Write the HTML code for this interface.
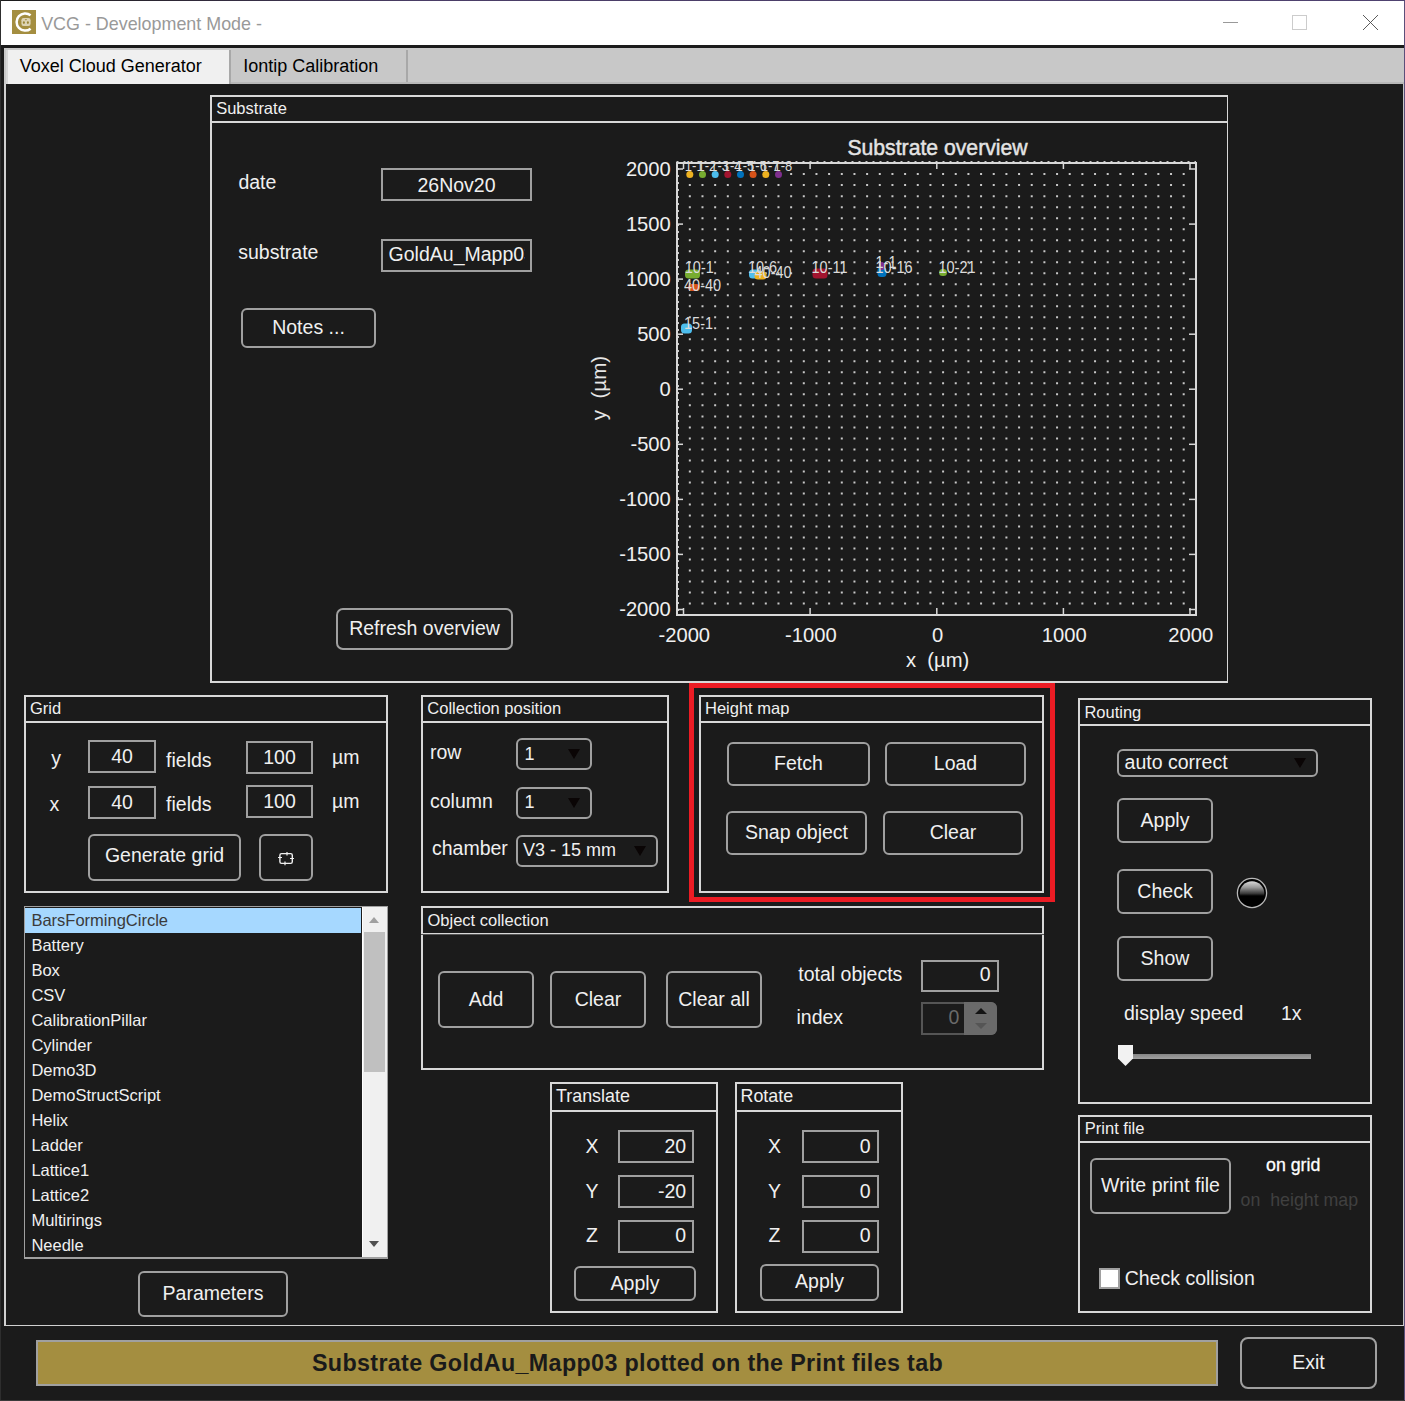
<!DOCTYPE html>
<html><head><meta charset="utf-8"><style>
html,body{margin:0;padding:0;}
body{width:1405px;height:1401px;overflow:hidden;background:#1b1b1b;position:relative;font-family:"Liberation Sans",sans-serif;}
.t{position:absolute;white-space:pre;}
</style></head><body>

<div style="position:absolute;left:0px;top:0px;width:1405px;height:1401px;box-sizing:border-box;background:#1b1b1b;"></div>
<div style="position:absolute;left:1px;top:1px;width:1403px;height:44px;box-sizing:border-box;background:#ffffff;"></div>
<div style="position:absolute;left:1404px;top:0px;width:1px;height:1401px;box-sizing:border-box;background:#5b4f7a;"></div>
<div style="position:absolute;left:0px;top:0px;width:1405px;height:1px;box-sizing:border-box;background:linear-gradient(90deg,#1b1b1b 0px,#2a2530 150px,#4a3d66 420px,#4f4270 1405px);"></div>
<div style="position:absolute;left:0px;top:0px;width:1px;height:1401px;box-sizing:border-box;background:#2e2e2e;"></div>
<div style="position:absolute;left:0px;top:1400px;width:1405px;height:1px;box-sizing:border-box;background:#3a3a3a;"></div>
<div style="position:absolute;left:12px;top:10px;width:24px;height:24px;box-sizing:border-box;background:#a48e40;"></div>
<svg style="position:absolute;left:12px;top:10px" width="24" height="24" viewBox="0 0 24 24"><path d="M18.6 5.3 A8.6 8.6 0 1 0 18.6 18.7" fill="none" stroke="#fff" stroke-width="2.5"/><rect x="9.4" y="8.1" width="9.2" height="7.9" rx="2.2" fill="#ddd3b4"/><ellipse cx="11.9" cy="12.6" rx="1" ry="1.4" fill="#9a8536"/><ellipse cx="15.9" cy="12.6" rx="1" ry="1.4" fill="#9a8536"/><path d="M12.6 9.2h2.6l-1.3 1.3z" fill="#9a8536"/></svg>
<div class="t" style="left:41.20px;top:16.25px;font-size:17.9px;line-height:17.9px;color:#999999;font-weight:normal;">VCG - Development Mode -</div>
<div style="position:absolute;left:1223px;top:22px;width:15px;height:1px;box-sizing:border-box;background:#999999;"></div>
<div style="position:absolute;left:1292px;top:15px;width:15px;height:15px;box-sizing:border-box;border:1px solid #cccccc;"></div>
<svg style="position:absolute;left:1362px;top:14px" width="17" height="17" viewBox="0 0 17 17"><path d="M1 1L16 16M16 1L1 16" stroke="#4a4a4a" stroke-width="0.9"/></svg>
<div style="position:absolute;left:1px;top:45px;width:1403px;height:3px;box-sizing:border-box;background:#1b1b1b;"></div>
<div style="position:absolute;left:4px;top:48px;width:1400px;height:36px;box-sizing:border-box;background:#c8c8c8;"></div>
<div style="position:absolute;left:7px;top:50px;width:223px;height:34px;box-sizing:border-box;background:#f0f0f0;"></div>
<div style="position:absolute;left:4px;top:48px;width:3px;height:36px;box-sizing:border-box;background:#c8c8c8;"></div>
<div style="position:absolute;left:6px;top:50px;width:2px;height:34px;box-sizing:border-box;background:#d8d8d8;"></div>
<div style="position:absolute;left:229px;top:50px;width:2px;height:34px;box-sizing:border-box;background:#a8a8a8;"></div>
<div style="position:absolute;left:406px;top:50px;width:2px;height:33px;box-sizing:border-box;background:#a8a8a8;"></div>
<div style="position:absolute;left:231px;top:82px;width:1173px;height:2px;box-sizing:border-box;background:#b8b8b8;"></div>
<div class="t" style="left:19.70px;top:57.16px;font-size:18px;line-height:18px;color:#000000;font-weight:normal;">Voxel Cloud Generator</div>
<div class="t" style="left:243.30px;top:57.16px;font-size:18px;line-height:18px;color:#000000;font-weight:normal;">Iontip Calibration</div>
<div style="position:absolute;left:4px;top:84px;width:2px;height:1242px;box-sizing:border-box;background:#d0d0d0;"></div>
<div style="position:absolute;left:1403px;top:84px;width:1px;height:1242px;box-sizing:border-box;background:#c8c8c8;"></div>
<div style="position:absolute;left:4px;top:1325px;width:1400px;height:1px;box-sizing:border-box;background:#d0d0d0;"></div>
<div style="position:absolute;left:210px;top:95px;width:1019px;height:588px;box-sizing:border-box;border:2px solid #d8d8d8;"></div>
<div style="position:absolute;left:210px;top:121px;width:1019px;height:2px;box-sizing:border-box;background:#d8d8d8;"></div>
<div class="t" style="left:216.20px;top:99.73px;font-size:16.5px;line-height:16.5px;color:#f0f0f0;font-weight:normal;">Substrate</div>
<div style="position:absolute;left:1228px;top:95px;width:1px;height:588px;box-sizing:border-box;background:#1b1b1b;"></div>
<div class="t" style="left:238.40px;top:172.89px;font-size:19.5px;line-height:19.5px;color:#f0f0f0;font-weight:normal;">date</div>
<div style="position:absolute;left:381px;top:168px;width:151px;height:33px;box-sizing:border-box;border:2px solid #a0a0a0;"></div>
<div class="t" style="left:56.50px;width:800px;text-align:center;top:175.89px;font-size:19.5px;line-height:19.5px;color:#f0f0f0;font-weight:normal;">26Nov20</div>
<div class="t" style="left:238.20px;top:243.49px;font-size:19.5px;line-height:19.5px;color:#f0f0f0;font-weight:normal;">substrate</div>
<div style="position:absolute;left:381px;top:239px;width:151px;height:33px;box-sizing:border-box;border:2px solid #a0a0a0;"></div>
<div style="position:absolute;left:383px;top:242px;width:142px;height:28px;overflow:hidden;"><div class="t" style="left:5.6px;top:2.99px;font-size:19.5px;line-height:19.5px;color:#f0f0f0">GoldAu_Mapp03</div></div>
<div style="position:absolute;left:241px;top:308px;width:135px;height:40px;box-sizing:border-box;border:2px solid #a0a0a0;border-radius:6px;"></div>
<div class="t" style="left:-91.50px;width:800px;text-align:center;top:317.79px;font-size:19.5px;line-height:19.5px;color:#f0f0f0;font-weight:normal;">Notes ...</div>
<div style="position:absolute;left:336px;top:608px;width:177px;height:42px;box-sizing:border-box;border:2px solid #a0a0a0;border-radius:7px;"></div>
<div class="t" style="left:24.50px;width:800px;text-align:center;top:619.39px;font-size:19.5px;line-height:19.5px;color:#f0f0f0;font-weight:normal;">Refresh overview</div>
<svg style="position:absolute;left:0;top:0" width="1405" height="1401"><path d="M688.83 602.59h2v2h-2zM688.83 591.58h2v2h-2zM688.83 580.57h2v2h-2zM688.83 569.56h2v2h-2zM688.83 558.54h2v2h-2zM688.83 547.53h2v2h-2zM688.83 536.52h2v2h-2zM688.83 525.51h2v2h-2zM688.83 514.49h2v2h-2zM688.83 503.48h2v2h-2zM688.83 492.47h2v2h-2zM688.83 481.46h2v2h-2zM688.83 470.44h2v2h-2zM688.83 459.43h2v2h-2zM688.83 448.42h2v2h-2zM688.83 437.41h2v2h-2zM688.83 426.39h2v2h-2zM688.83 415.38h2v2h-2zM688.83 404.37h2v2h-2zM688.83 393.36h2v2h-2zM688.83 382.34h2v2h-2zM688.83 371.33h2v2h-2zM688.83 360.32h2v2h-2zM688.83 349.31h2v2h-2zM688.83 338.29h2v2h-2zM688.83 327.28h2v2h-2zM688.83 316.27h2v2h-2zM688.83 305.26h2v2h-2zM688.83 294.24h2v2h-2zM688.83 283.23h2v2h-2zM688.83 272.22h2v2h-2zM688.83 261.21h2v2h-2zM688.83 250.19h2v2h-2zM688.83 239.18h2v2h-2zM688.83 228.17h2v2h-2zM688.83 217.16h2v2h-2zM688.83 206.14h2v2h-2zM688.83 195.13h2v2h-2zM688.83 184.12h2v2h-2zM688.83 173.11h2v2h-2zM701.49 602.59h2v2h-2zM701.49 591.58h2v2h-2zM701.49 580.57h2v2h-2zM701.49 569.56h2v2h-2zM701.49 558.54h2v2h-2zM701.49 547.53h2v2h-2zM701.49 536.52h2v2h-2zM701.49 525.51h2v2h-2zM701.49 514.49h2v2h-2zM701.49 503.48h2v2h-2zM701.49 492.47h2v2h-2zM701.49 481.46h2v2h-2zM701.49 470.44h2v2h-2zM701.49 459.43h2v2h-2zM701.49 448.42h2v2h-2zM701.49 437.41h2v2h-2zM701.49 426.39h2v2h-2zM701.49 415.38h2v2h-2zM701.49 404.37h2v2h-2zM701.49 393.36h2v2h-2zM701.49 382.34h2v2h-2zM701.49 371.33h2v2h-2zM701.49 360.32h2v2h-2zM701.49 349.31h2v2h-2zM701.49 338.29h2v2h-2zM701.49 327.28h2v2h-2zM701.49 316.27h2v2h-2zM701.49 305.26h2v2h-2zM701.49 294.24h2v2h-2zM701.49 283.23h2v2h-2zM701.49 272.22h2v2h-2zM701.49 261.21h2v2h-2zM701.49 250.19h2v2h-2zM701.49 239.18h2v2h-2zM701.49 228.17h2v2h-2zM701.49 217.16h2v2h-2zM701.49 206.14h2v2h-2zM701.49 195.13h2v2h-2zM701.49 184.12h2v2h-2zM701.49 173.11h2v2h-2zM714.16 602.59h2v2h-2zM714.16 591.58h2v2h-2zM714.16 580.57h2v2h-2zM714.16 569.56h2v2h-2zM714.16 558.54h2v2h-2zM714.16 547.53h2v2h-2zM714.16 536.52h2v2h-2zM714.16 525.51h2v2h-2zM714.16 514.49h2v2h-2zM714.16 503.48h2v2h-2zM714.16 492.47h2v2h-2zM714.16 481.46h2v2h-2zM714.16 470.44h2v2h-2zM714.16 459.43h2v2h-2zM714.16 448.42h2v2h-2zM714.16 437.41h2v2h-2zM714.16 426.39h2v2h-2zM714.16 415.38h2v2h-2zM714.16 404.37h2v2h-2zM714.16 393.36h2v2h-2zM714.16 382.34h2v2h-2zM714.16 371.33h2v2h-2zM714.16 360.32h2v2h-2zM714.16 349.31h2v2h-2zM714.16 338.29h2v2h-2zM714.16 327.28h2v2h-2zM714.16 316.27h2v2h-2zM714.16 305.26h2v2h-2zM714.16 294.24h2v2h-2zM714.16 283.23h2v2h-2zM714.16 272.22h2v2h-2zM714.16 261.21h2v2h-2zM714.16 250.19h2v2h-2zM714.16 239.18h2v2h-2zM714.16 228.17h2v2h-2zM714.16 217.16h2v2h-2zM714.16 206.14h2v2h-2zM714.16 195.13h2v2h-2zM714.16 184.12h2v2h-2zM714.16 173.11h2v2h-2zM726.82 602.59h2v2h-2zM726.82 591.58h2v2h-2zM726.82 580.57h2v2h-2zM726.82 569.56h2v2h-2zM726.82 558.54h2v2h-2zM726.82 547.53h2v2h-2zM726.82 536.52h2v2h-2zM726.82 525.51h2v2h-2zM726.82 514.49h2v2h-2zM726.82 503.48h2v2h-2zM726.82 492.47h2v2h-2zM726.82 481.46h2v2h-2zM726.82 470.44h2v2h-2zM726.82 459.43h2v2h-2zM726.82 448.42h2v2h-2zM726.82 437.41h2v2h-2zM726.82 426.39h2v2h-2zM726.82 415.38h2v2h-2zM726.82 404.37h2v2h-2zM726.82 393.36h2v2h-2zM726.82 382.34h2v2h-2zM726.82 371.33h2v2h-2zM726.82 360.32h2v2h-2zM726.82 349.31h2v2h-2zM726.82 338.29h2v2h-2zM726.82 327.28h2v2h-2zM726.82 316.27h2v2h-2zM726.82 305.26h2v2h-2zM726.82 294.24h2v2h-2zM726.82 283.23h2v2h-2zM726.82 272.22h2v2h-2zM726.82 261.21h2v2h-2zM726.82 250.19h2v2h-2zM726.82 239.18h2v2h-2zM726.82 228.17h2v2h-2zM726.82 217.16h2v2h-2zM726.82 206.14h2v2h-2zM726.82 195.13h2v2h-2zM726.82 184.12h2v2h-2zM726.82 173.11h2v2h-2zM739.48 602.59h2v2h-2zM739.48 591.58h2v2h-2zM739.48 580.57h2v2h-2zM739.48 569.56h2v2h-2zM739.48 558.54h2v2h-2zM739.48 547.53h2v2h-2zM739.48 536.52h2v2h-2zM739.48 525.51h2v2h-2zM739.48 514.49h2v2h-2zM739.48 503.48h2v2h-2zM739.48 492.47h2v2h-2zM739.48 481.46h2v2h-2zM739.48 470.44h2v2h-2zM739.48 459.43h2v2h-2zM739.48 448.42h2v2h-2zM739.48 437.41h2v2h-2zM739.48 426.39h2v2h-2zM739.48 415.38h2v2h-2zM739.48 404.37h2v2h-2zM739.48 393.36h2v2h-2zM739.48 382.34h2v2h-2zM739.48 371.33h2v2h-2zM739.48 360.32h2v2h-2zM739.48 349.31h2v2h-2zM739.48 338.29h2v2h-2zM739.48 327.28h2v2h-2zM739.48 316.27h2v2h-2zM739.48 305.26h2v2h-2zM739.48 294.24h2v2h-2zM739.48 283.23h2v2h-2zM739.48 272.22h2v2h-2zM739.48 261.21h2v2h-2zM739.48 250.19h2v2h-2zM739.48 239.18h2v2h-2zM739.48 228.17h2v2h-2zM739.48 217.16h2v2h-2zM739.48 206.14h2v2h-2zM739.48 195.13h2v2h-2zM739.48 184.12h2v2h-2zM739.48 173.11h2v2h-2zM752.15 602.59h2v2h-2zM752.15 591.58h2v2h-2zM752.15 580.57h2v2h-2zM752.15 569.56h2v2h-2zM752.15 558.54h2v2h-2zM752.15 547.53h2v2h-2zM752.15 536.52h2v2h-2zM752.15 525.51h2v2h-2zM752.15 514.49h2v2h-2zM752.15 503.48h2v2h-2zM752.15 492.47h2v2h-2zM752.15 481.46h2v2h-2zM752.15 470.44h2v2h-2zM752.15 459.43h2v2h-2zM752.15 448.42h2v2h-2zM752.15 437.41h2v2h-2zM752.15 426.39h2v2h-2zM752.15 415.38h2v2h-2zM752.15 404.37h2v2h-2zM752.15 393.36h2v2h-2zM752.15 382.34h2v2h-2zM752.15 371.33h2v2h-2zM752.15 360.32h2v2h-2zM752.15 349.31h2v2h-2zM752.15 338.29h2v2h-2zM752.15 327.28h2v2h-2zM752.15 316.27h2v2h-2zM752.15 305.26h2v2h-2zM752.15 294.24h2v2h-2zM752.15 283.23h2v2h-2zM752.15 272.22h2v2h-2zM752.15 261.21h2v2h-2zM752.15 250.19h2v2h-2zM752.15 239.18h2v2h-2zM752.15 228.17h2v2h-2zM752.15 217.16h2v2h-2zM752.15 206.14h2v2h-2zM752.15 195.13h2v2h-2zM752.15 184.12h2v2h-2zM752.15 173.11h2v2h-2zM764.81 602.59h2v2h-2zM764.81 591.58h2v2h-2zM764.81 580.57h2v2h-2zM764.81 569.56h2v2h-2zM764.81 558.54h2v2h-2zM764.81 547.53h2v2h-2zM764.81 536.52h2v2h-2zM764.81 525.51h2v2h-2zM764.81 514.49h2v2h-2zM764.81 503.48h2v2h-2zM764.81 492.47h2v2h-2zM764.81 481.46h2v2h-2zM764.81 470.44h2v2h-2zM764.81 459.43h2v2h-2zM764.81 448.42h2v2h-2zM764.81 437.41h2v2h-2zM764.81 426.39h2v2h-2zM764.81 415.38h2v2h-2zM764.81 404.37h2v2h-2zM764.81 393.36h2v2h-2zM764.81 382.34h2v2h-2zM764.81 371.33h2v2h-2zM764.81 360.32h2v2h-2zM764.81 349.31h2v2h-2zM764.81 338.29h2v2h-2zM764.81 327.28h2v2h-2zM764.81 316.27h2v2h-2zM764.81 305.26h2v2h-2zM764.81 294.24h2v2h-2zM764.81 283.23h2v2h-2zM764.81 272.22h2v2h-2zM764.81 261.21h2v2h-2zM764.81 250.19h2v2h-2zM764.81 239.18h2v2h-2zM764.81 228.17h2v2h-2zM764.81 217.16h2v2h-2zM764.81 206.14h2v2h-2zM764.81 195.13h2v2h-2zM764.81 184.12h2v2h-2zM764.81 173.11h2v2h-2zM777.47 602.59h2v2h-2zM777.47 591.58h2v2h-2zM777.47 580.57h2v2h-2zM777.47 569.56h2v2h-2zM777.47 558.54h2v2h-2zM777.47 547.53h2v2h-2zM777.47 536.52h2v2h-2zM777.47 525.51h2v2h-2zM777.47 514.49h2v2h-2zM777.47 503.48h2v2h-2zM777.47 492.47h2v2h-2zM777.47 481.46h2v2h-2zM777.47 470.44h2v2h-2zM777.47 459.43h2v2h-2zM777.47 448.42h2v2h-2zM777.47 437.41h2v2h-2zM777.47 426.39h2v2h-2zM777.47 415.38h2v2h-2zM777.47 404.37h2v2h-2zM777.47 393.36h2v2h-2zM777.47 382.34h2v2h-2zM777.47 371.33h2v2h-2zM777.47 360.32h2v2h-2zM777.47 349.31h2v2h-2zM777.47 338.29h2v2h-2zM777.47 327.28h2v2h-2zM777.47 316.27h2v2h-2zM777.47 305.26h2v2h-2zM777.47 294.24h2v2h-2zM777.47 283.23h2v2h-2zM777.47 272.22h2v2h-2zM777.47 261.21h2v2h-2zM777.47 250.19h2v2h-2zM777.47 239.18h2v2h-2zM777.47 228.17h2v2h-2zM777.47 217.16h2v2h-2zM777.47 206.14h2v2h-2zM777.47 195.13h2v2h-2zM777.47 184.12h2v2h-2zM777.47 173.11h2v2h-2zM790.14 602.59h2v2h-2zM790.14 591.58h2v2h-2zM790.14 580.57h2v2h-2zM790.14 569.56h2v2h-2zM790.14 558.54h2v2h-2zM790.14 547.53h2v2h-2zM790.14 536.52h2v2h-2zM790.14 525.51h2v2h-2zM790.14 514.49h2v2h-2zM790.14 503.48h2v2h-2zM790.14 492.47h2v2h-2zM790.14 481.46h2v2h-2zM790.14 470.44h2v2h-2zM790.14 459.43h2v2h-2zM790.14 448.42h2v2h-2zM790.14 437.41h2v2h-2zM790.14 426.39h2v2h-2zM790.14 415.38h2v2h-2zM790.14 404.37h2v2h-2zM790.14 393.36h2v2h-2zM790.14 382.34h2v2h-2zM790.14 371.33h2v2h-2zM790.14 360.32h2v2h-2zM790.14 349.31h2v2h-2zM790.14 338.29h2v2h-2zM790.14 327.28h2v2h-2zM790.14 316.27h2v2h-2zM790.14 305.26h2v2h-2zM790.14 294.24h2v2h-2zM790.14 283.23h2v2h-2zM790.14 272.22h2v2h-2zM790.14 261.21h2v2h-2zM790.14 250.19h2v2h-2zM790.14 239.18h2v2h-2zM790.14 228.17h2v2h-2zM790.14 217.16h2v2h-2zM790.14 206.14h2v2h-2zM790.14 195.13h2v2h-2zM790.14 184.12h2v2h-2zM790.14 173.11h2v2h-2zM802.80 602.59h2v2h-2zM802.80 591.58h2v2h-2zM802.80 580.57h2v2h-2zM802.80 569.56h2v2h-2zM802.80 558.54h2v2h-2zM802.80 547.53h2v2h-2zM802.80 536.52h2v2h-2zM802.80 525.51h2v2h-2zM802.80 514.49h2v2h-2zM802.80 503.48h2v2h-2zM802.80 492.47h2v2h-2zM802.80 481.46h2v2h-2zM802.80 470.44h2v2h-2zM802.80 459.43h2v2h-2zM802.80 448.42h2v2h-2zM802.80 437.41h2v2h-2zM802.80 426.39h2v2h-2zM802.80 415.38h2v2h-2zM802.80 404.37h2v2h-2zM802.80 393.36h2v2h-2zM802.80 382.34h2v2h-2zM802.80 371.33h2v2h-2zM802.80 360.32h2v2h-2zM802.80 349.31h2v2h-2zM802.80 338.29h2v2h-2zM802.80 327.28h2v2h-2zM802.80 316.27h2v2h-2zM802.80 305.26h2v2h-2zM802.80 294.24h2v2h-2zM802.80 283.23h2v2h-2zM802.80 272.22h2v2h-2zM802.80 261.21h2v2h-2zM802.80 250.19h2v2h-2zM802.80 239.18h2v2h-2zM802.80 228.17h2v2h-2zM802.80 217.16h2v2h-2zM802.80 206.14h2v2h-2zM802.80 195.13h2v2h-2zM802.80 184.12h2v2h-2zM802.80 173.11h2v2h-2zM815.46 602.59h2v2h-2zM815.46 591.58h2v2h-2zM815.46 580.57h2v2h-2zM815.46 569.56h2v2h-2zM815.46 558.54h2v2h-2zM815.46 547.53h2v2h-2zM815.46 536.52h2v2h-2zM815.46 525.51h2v2h-2zM815.46 514.49h2v2h-2zM815.46 503.48h2v2h-2zM815.46 492.47h2v2h-2zM815.46 481.46h2v2h-2zM815.46 470.44h2v2h-2zM815.46 459.43h2v2h-2zM815.46 448.42h2v2h-2zM815.46 437.41h2v2h-2zM815.46 426.39h2v2h-2zM815.46 415.38h2v2h-2zM815.46 404.37h2v2h-2zM815.46 393.36h2v2h-2zM815.46 382.34h2v2h-2zM815.46 371.33h2v2h-2zM815.46 360.32h2v2h-2zM815.46 349.31h2v2h-2zM815.46 338.29h2v2h-2zM815.46 327.28h2v2h-2zM815.46 316.27h2v2h-2zM815.46 305.26h2v2h-2zM815.46 294.24h2v2h-2zM815.46 283.23h2v2h-2zM815.46 272.22h2v2h-2zM815.46 261.21h2v2h-2zM815.46 250.19h2v2h-2zM815.46 239.18h2v2h-2zM815.46 228.17h2v2h-2zM815.46 217.16h2v2h-2zM815.46 206.14h2v2h-2zM815.46 195.13h2v2h-2zM815.46 184.12h2v2h-2zM815.46 173.11h2v2h-2zM828.12 602.59h2v2h-2zM828.12 591.58h2v2h-2zM828.12 580.57h2v2h-2zM828.12 569.56h2v2h-2zM828.12 558.54h2v2h-2zM828.12 547.53h2v2h-2zM828.12 536.52h2v2h-2zM828.12 525.51h2v2h-2zM828.12 514.49h2v2h-2zM828.12 503.48h2v2h-2zM828.12 492.47h2v2h-2zM828.12 481.46h2v2h-2zM828.12 470.44h2v2h-2zM828.12 459.43h2v2h-2zM828.12 448.42h2v2h-2zM828.12 437.41h2v2h-2zM828.12 426.39h2v2h-2zM828.12 415.38h2v2h-2zM828.12 404.37h2v2h-2zM828.12 393.36h2v2h-2zM828.12 382.34h2v2h-2zM828.12 371.33h2v2h-2zM828.12 360.32h2v2h-2zM828.12 349.31h2v2h-2zM828.12 338.29h2v2h-2zM828.12 327.28h2v2h-2zM828.12 316.27h2v2h-2zM828.12 305.26h2v2h-2zM828.12 294.24h2v2h-2zM828.12 283.23h2v2h-2zM828.12 272.22h2v2h-2zM828.12 261.21h2v2h-2zM828.12 250.19h2v2h-2zM828.12 239.18h2v2h-2zM828.12 228.17h2v2h-2zM828.12 217.16h2v2h-2zM828.12 206.14h2v2h-2zM828.12 195.13h2v2h-2zM828.12 184.12h2v2h-2zM828.12 173.11h2v2h-2zM840.79 602.59h2v2h-2zM840.79 591.58h2v2h-2zM840.79 580.57h2v2h-2zM840.79 569.56h2v2h-2zM840.79 558.54h2v2h-2zM840.79 547.53h2v2h-2zM840.79 536.52h2v2h-2zM840.79 525.51h2v2h-2zM840.79 514.49h2v2h-2zM840.79 503.48h2v2h-2zM840.79 492.47h2v2h-2zM840.79 481.46h2v2h-2zM840.79 470.44h2v2h-2zM840.79 459.43h2v2h-2zM840.79 448.42h2v2h-2zM840.79 437.41h2v2h-2zM840.79 426.39h2v2h-2zM840.79 415.38h2v2h-2zM840.79 404.37h2v2h-2zM840.79 393.36h2v2h-2zM840.79 382.34h2v2h-2zM840.79 371.33h2v2h-2zM840.79 360.32h2v2h-2zM840.79 349.31h2v2h-2zM840.79 338.29h2v2h-2zM840.79 327.28h2v2h-2zM840.79 316.27h2v2h-2zM840.79 305.26h2v2h-2zM840.79 294.24h2v2h-2zM840.79 283.23h2v2h-2zM840.79 272.22h2v2h-2zM840.79 261.21h2v2h-2zM840.79 250.19h2v2h-2zM840.79 239.18h2v2h-2zM840.79 228.17h2v2h-2zM840.79 217.16h2v2h-2zM840.79 206.14h2v2h-2zM840.79 195.13h2v2h-2zM840.79 184.12h2v2h-2zM840.79 173.11h2v2h-2zM853.45 602.59h2v2h-2zM853.45 591.58h2v2h-2zM853.45 580.57h2v2h-2zM853.45 569.56h2v2h-2zM853.45 558.54h2v2h-2zM853.45 547.53h2v2h-2zM853.45 536.52h2v2h-2zM853.45 525.51h2v2h-2zM853.45 514.49h2v2h-2zM853.45 503.48h2v2h-2zM853.45 492.47h2v2h-2zM853.45 481.46h2v2h-2zM853.45 470.44h2v2h-2zM853.45 459.43h2v2h-2zM853.45 448.42h2v2h-2zM853.45 437.41h2v2h-2zM853.45 426.39h2v2h-2zM853.45 415.38h2v2h-2zM853.45 404.37h2v2h-2zM853.45 393.36h2v2h-2zM853.45 382.34h2v2h-2zM853.45 371.33h2v2h-2zM853.45 360.32h2v2h-2zM853.45 349.31h2v2h-2zM853.45 338.29h2v2h-2zM853.45 327.28h2v2h-2zM853.45 316.27h2v2h-2zM853.45 305.26h2v2h-2zM853.45 294.24h2v2h-2zM853.45 283.23h2v2h-2zM853.45 272.22h2v2h-2zM853.45 261.21h2v2h-2zM853.45 250.19h2v2h-2zM853.45 239.18h2v2h-2zM853.45 228.17h2v2h-2zM853.45 217.16h2v2h-2zM853.45 206.14h2v2h-2zM853.45 195.13h2v2h-2zM853.45 184.12h2v2h-2zM853.45 173.11h2v2h-2zM866.11 602.59h2v2h-2zM866.11 591.58h2v2h-2zM866.11 580.57h2v2h-2zM866.11 569.56h2v2h-2zM866.11 558.54h2v2h-2zM866.11 547.53h2v2h-2zM866.11 536.52h2v2h-2zM866.11 525.51h2v2h-2zM866.11 514.49h2v2h-2zM866.11 503.48h2v2h-2zM866.11 492.47h2v2h-2zM866.11 481.46h2v2h-2zM866.11 470.44h2v2h-2zM866.11 459.43h2v2h-2zM866.11 448.42h2v2h-2zM866.11 437.41h2v2h-2zM866.11 426.39h2v2h-2zM866.11 415.38h2v2h-2zM866.11 404.37h2v2h-2zM866.11 393.36h2v2h-2zM866.11 382.34h2v2h-2zM866.11 371.33h2v2h-2zM866.11 360.32h2v2h-2zM866.11 349.31h2v2h-2zM866.11 338.29h2v2h-2zM866.11 327.28h2v2h-2zM866.11 316.27h2v2h-2zM866.11 305.26h2v2h-2zM866.11 294.24h2v2h-2zM866.11 283.23h2v2h-2zM866.11 272.22h2v2h-2zM866.11 261.21h2v2h-2zM866.11 250.19h2v2h-2zM866.11 239.18h2v2h-2zM866.11 228.17h2v2h-2zM866.11 217.16h2v2h-2zM866.11 206.14h2v2h-2zM866.11 195.13h2v2h-2zM866.11 184.12h2v2h-2zM866.11 173.11h2v2h-2zM878.78 602.59h2v2h-2zM878.78 591.58h2v2h-2zM878.78 580.57h2v2h-2zM878.78 569.56h2v2h-2zM878.78 558.54h2v2h-2zM878.78 547.53h2v2h-2zM878.78 536.52h2v2h-2zM878.78 525.51h2v2h-2zM878.78 514.49h2v2h-2zM878.78 503.48h2v2h-2zM878.78 492.47h2v2h-2zM878.78 481.46h2v2h-2zM878.78 470.44h2v2h-2zM878.78 459.43h2v2h-2zM878.78 448.42h2v2h-2zM878.78 437.41h2v2h-2zM878.78 426.39h2v2h-2zM878.78 415.38h2v2h-2zM878.78 404.37h2v2h-2zM878.78 393.36h2v2h-2zM878.78 382.34h2v2h-2zM878.78 371.33h2v2h-2zM878.78 360.32h2v2h-2zM878.78 349.31h2v2h-2zM878.78 338.29h2v2h-2zM878.78 327.28h2v2h-2zM878.78 316.27h2v2h-2zM878.78 305.26h2v2h-2zM878.78 294.24h2v2h-2zM878.78 283.23h2v2h-2zM878.78 272.22h2v2h-2zM878.78 261.21h2v2h-2zM878.78 250.19h2v2h-2zM878.78 239.18h2v2h-2zM878.78 228.17h2v2h-2zM878.78 217.16h2v2h-2zM878.78 206.14h2v2h-2zM878.78 195.13h2v2h-2zM878.78 184.12h2v2h-2zM878.78 173.11h2v2h-2zM891.44 602.59h2v2h-2zM891.44 591.58h2v2h-2zM891.44 580.57h2v2h-2zM891.44 569.56h2v2h-2zM891.44 558.54h2v2h-2zM891.44 547.53h2v2h-2zM891.44 536.52h2v2h-2zM891.44 525.51h2v2h-2zM891.44 514.49h2v2h-2zM891.44 503.48h2v2h-2zM891.44 492.47h2v2h-2zM891.44 481.46h2v2h-2zM891.44 470.44h2v2h-2zM891.44 459.43h2v2h-2zM891.44 448.42h2v2h-2zM891.44 437.41h2v2h-2zM891.44 426.39h2v2h-2zM891.44 415.38h2v2h-2zM891.44 404.37h2v2h-2zM891.44 393.36h2v2h-2zM891.44 382.34h2v2h-2zM891.44 371.33h2v2h-2zM891.44 360.32h2v2h-2zM891.44 349.31h2v2h-2zM891.44 338.29h2v2h-2zM891.44 327.28h2v2h-2zM891.44 316.27h2v2h-2zM891.44 305.26h2v2h-2zM891.44 294.24h2v2h-2zM891.44 283.23h2v2h-2zM891.44 272.22h2v2h-2zM891.44 261.21h2v2h-2zM891.44 250.19h2v2h-2zM891.44 239.18h2v2h-2zM891.44 228.17h2v2h-2zM891.44 217.16h2v2h-2zM891.44 206.14h2v2h-2zM891.44 195.13h2v2h-2zM891.44 184.12h2v2h-2zM891.44 173.11h2v2h-2zM904.10 602.59h2v2h-2zM904.10 591.58h2v2h-2zM904.10 580.57h2v2h-2zM904.10 569.56h2v2h-2zM904.10 558.54h2v2h-2zM904.10 547.53h2v2h-2zM904.10 536.52h2v2h-2zM904.10 525.51h2v2h-2zM904.10 514.49h2v2h-2zM904.10 503.48h2v2h-2zM904.10 492.47h2v2h-2zM904.10 481.46h2v2h-2zM904.10 470.44h2v2h-2zM904.10 459.43h2v2h-2zM904.10 448.42h2v2h-2zM904.10 437.41h2v2h-2zM904.10 426.39h2v2h-2zM904.10 415.38h2v2h-2zM904.10 404.37h2v2h-2zM904.10 393.36h2v2h-2zM904.10 382.34h2v2h-2zM904.10 371.33h2v2h-2zM904.10 360.32h2v2h-2zM904.10 349.31h2v2h-2zM904.10 338.29h2v2h-2zM904.10 327.28h2v2h-2zM904.10 316.27h2v2h-2zM904.10 305.26h2v2h-2zM904.10 294.24h2v2h-2zM904.10 283.23h2v2h-2zM904.10 272.22h2v2h-2zM904.10 261.21h2v2h-2zM904.10 250.19h2v2h-2zM904.10 239.18h2v2h-2zM904.10 228.17h2v2h-2zM904.10 217.16h2v2h-2zM904.10 206.14h2v2h-2zM904.10 195.13h2v2h-2zM904.10 184.12h2v2h-2zM904.10 173.11h2v2h-2zM916.77 602.59h2v2h-2zM916.77 591.58h2v2h-2zM916.77 580.57h2v2h-2zM916.77 569.56h2v2h-2zM916.77 558.54h2v2h-2zM916.77 547.53h2v2h-2zM916.77 536.52h2v2h-2zM916.77 525.51h2v2h-2zM916.77 514.49h2v2h-2zM916.77 503.48h2v2h-2zM916.77 492.47h2v2h-2zM916.77 481.46h2v2h-2zM916.77 470.44h2v2h-2zM916.77 459.43h2v2h-2zM916.77 448.42h2v2h-2zM916.77 437.41h2v2h-2zM916.77 426.39h2v2h-2zM916.77 415.38h2v2h-2zM916.77 404.37h2v2h-2zM916.77 393.36h2v2h-2zM916.77 382.34h2v2h-2zM916.77 371.33h2v2h-2zM916.77 360.32h2v2h-2zM916.77 349.31h2v2h-2zM916.77 338.29h2v2h-2zM916.77 327.28h2v2h-2zM916.77 316.27h2v2h-2zM916.77 305.26h2v2h-2zM916.77 294.24h2v2h-2zM916.77 283.23h2v2h-2zM916.77 272.22h2v2h-2zM916.77 261.21h2v2h-2zM916.77 250.19h2v2h-2zM916.77 239.18h2v2h-2zM916.77 228.17h2v2h-2zM916.77 217.16h2v2h-2zM916.77 206.14h2v2h-2zM916.77 195.13h2v2h-2zM916.77 184.12h2v2h-2zM916.77 173.11h2v2h-2zM929.43 602.59h2v2h-2zM929.43 591.58h2v2h-2zM929.43 580.57h2v2h-2zM929.43 569.56h2v2h-2zM929.43 558.54h2v2h-2zM929.43 547.53h2v2h-2zM929.43 536.52h2v2h-2zM929.43 525.51h2v2h-2zM929.43 514.49h2v2h-2zM929.43 503.48h2v2h-2zM929.43 492.47h2v2h-2zM929.43 481.46h2v2h-2zM929.43 470.44h2v2h-2zM929.43 459.43h2v2h-2zM929.43 448.42h2v2h-2zM929.43 437.41h2v2h-2zM929.43 426.39h2v2h-2zM929.43 415.38h2v2h-2zM929.43 404.37h2v2h-2zM929.43 393.36h2v2h-2zM929.43 382.34h2v2h-2zM929.43 371.33h2v2h-2zM929.43 360.32h2v2h-2zM929.43 349.31h2v2h-2zM929.43 338.29h2v2h-2zM929.43 327.28h2v2h-2zM929.43 316.27h2v2h-2zM929.43 305.26h2v2h-2zM929.43 294.24h2v2h-2zM929.43 283.23h2v2h-2zM929.43 272.22h2v2h-2zM929.43 261.21h2v2h-2zM929.43 250.19h2v2h-2zM929.43 239.18h2v2h-2zM929.43 228.17h2v2h-2zM929.43 217.16h2v2h-2zM929.43 206.14h2v2h-2zM929.43 195.13h2v2h-2zM929.43 184.12h2v2h-2zM929.43 173.11h2v2h-2zM942.09 602.59h2v2h-2zM942.09 591.58h2v2h-2zM942.09 580.57h2v2h-2zM942.09 569.56h2v2h-2zM942.09 558.54h2v2h-2zM942.09 547.53h2v2h-2zM942.09 536.52h2v2h-2zM942.09 525.51h2v2h-2zM942.09 514.49h2v2h-2zM942.09 503.48h2v2h-2zM942.09 492.47h2v2h-2zM942.09 481.46h2v2h-2zM942.09 470.44h2v2h-2zM942.09 459.43h2v2h-2zM942.09 448.42h2v2h-2zM942.09 437.41h2v2h-2zM942.09 426.39h2v2h-2zM942.09 415.38h2v2h-2zM942.09 404.37h2v2h-2zM942.09 393.36h2v2h-2zM942.09 382.34h2v2h-2zM942.09 371.33h2v2h-2zM942.09 360.32h2v2h-2zM942.09 349.31h2v2h-2zM942.09 338.29h2v2h-2zM942.09 327.28h2v2h-2zM942.09 316.27h2v2h-2zM942.09 305.26h2v2h-2zM942.09 294.24h2v2h-2zM942.09 283.23h2v2h-2zM942.09 272.22h2v2h-2zM942.09 261.21h2v2h-2zM942.09 250.19h2v2h-2zM942.09 239.18h2v2h-2zM942.09 228.17h2v2h-2zM942.09 217.16h2v2h-2zM942.09 206.14h2v2h-2zM942.09 195.13h2v2h-2zM942.09 184.12h2v2h-2zM942.09 173.11h2v2h-2zM954.75 602.59h2v2h-2zM954.75 591.58h2v2h-2zM954.75 580.57h2v2h-2zM954.75 569.56h2v2h-2zM954.75 558.54h2v2h-2zM954.75 547.53h2v2h-2zM954.75 536.52h2v2h-2zM954.75 525.51h2v2h-2zM954.75 514.49h2v2h-2zM954.75 503.48h2v2h-2zM954.75 492.47h2v2h-2zM954.75 481.46h2v2h-2zM954.75 470.44h2v2h-2zM954.75 459.43h2v2h-2zM954.75 448.42h2v2h-2zM954.75 437.41h2v2h-2zM954.75 426.39h2v2h-2zM954.75 415.38h2v2h-2zM954.75 404.37h2v2h-2zM954.75 393.36h2v2h-2zM954.75 382.34h2v2h-2zM954.75 371.33h2v2h-2zM954.75 360.32h2v2h-2zM954.75 349.31h2v2h-2zM954.75 338.29h2v2h-2zM954.75 327.28h2v2h-2zM954.75 316.27h2v2h-2zM954.75 305.26h2v2h-2zM954.75 294.24h2v2h-2zM954.75 283.23h2v2h-2zM954.75 272.22h2v2h-2zM954.75 261.21h2v2h-2zM954.75 250.19h2v2h-2zM954.75 239.18h2v2h-2zM954.75 228.17h2v2h-2zM954.75 217.16h2v2h-2zM954.75 206.14h2v2h-2zM954.75 195.13h2v2h-2zM954.75 184.12h2v2h-2zM954.75 173.11h2v2h-2zM967.42 602.59h2v2h-2zM967.42 591.58h2v2h-2zM967.42 580.57h2v2h-2zM967.42 569.56h2v2h-2zM967.42 558.54h2v2h-2zM967.42 547.53h2v2h-2zM967.42 536.52h2v2h-2zM967.42 525.51h2v2h-2zM967.42 514.49h2v2h-2zM967.42 503.48h2v2h-2zM967.42 492.47h2v2h-2zM967.42 481.46h2v2h-2zM967.42 470.44h2v2h-2zM967.42 459.43h2v2h-2zM967.42 448.42h2v2h-2zM967.42 437.41h2v2h-2zM967.42 426.39h2v2h-2zM967.42 415.38h2v2h-2zM967.42 404.37h2v2h-2zM967.42 393.36h2v2h-2zM967.42 382.34h2v2h-2zM967.42 371.33h2v2h-2zM967.42 360.32h2v2h-2zM967.42 349.31h2v2h-2zM967.42 338.29h2v2h-2zM967.42 327.28h2v2h-2zM967.42 316.27h2v2h-2zM967.42 305.26h2v2h-2zM967.42 294.24h2v2h-2zM967.42 283.23h2v2h-2zM967.42 272.22h2v2h-2zM967.42 261.21h2v2h-2zM967.42 250.19h2v2h-2zM967.42 239.18h2v2h-2zM967.42 228.17h2v2h-2zM967.42 217.16h2v2h-2zM967.42 206.14h2v2h-2zM967.42 195.13h2v2h-2zM967.42 184.12h2v2h-2zM967.42 173.11h2v2h-2zM980.08 602.59h2v2h-2zM980.08 591.58h2v2h-2zM980.08 580.57h2v2h-2zM980.08 569.56h2v2h-2zM980.08 558.54h2v2h-2zM980.08 547.53h2v2h-2zM980.08 536.52h2v2h-2zM980.08 525.51h2v2h-2zM980.08 514.49h2v2h-2zM980.08 503.48h2v2h-2zM980.08 492.47h2v2h-2zM980.08 481.46h2v2h-2zM980.08 470.44h2v2h-2zM980.08 459.43h2v2h-2zM980.08 448.42h2v2h-2zM980.08 437.41h2v2h-2zM980.08 426.39h2v2h-2zM980.08 415.38h2v2h-2zM980.08 404.37h2v2h-2zM980.08 393.36h2v2h-2zM980.08 382.34h2v2h-2zM980.08 371.33h2v2h-2zM980.08 360.32h2v2h-2zM980.08 349.31h2v2h-2zM980.08 338.29h2v2h-2zM980.08 327.28h2v2h-2zM980.08 316.27h2v2h-2zM980.08 305.26h2v2h-2zM980.08 294.24h2v2h-2zM980.08 283.23h2v2h-2zM980.08 272.22h2v2h-2zM980.08 261.21h2v2h-2zM980.08 250.19h2v2h-2zM980.08 239.18h2v2h-2zM980.08 228.17h2v2h-2zM980.08 217.16h2v2h-2zM980.08 206.14h2v2h-2zM980.08 195.13h2v2h-2zM980.08 184.12h2v2h-2zM980.08 173.11h2v2h-2zM992.74 602.59h2v2h-2zM992.74 591.58h2v2h-2zM992.74 580.57h2v2h-2zM992.74 569.56h2v2h-2zM992.74 558.54h2v2h-2zM992.74 547.53h2v2h-2zM992.74 536.52h2v2h-2zM992.74 525.51h2v2h-2zM992.74 514.49h2v2h-2zM992.74 503.48h2v2h-2zM992.74 492.47h2v2h-2zM992.74 481.46h2v2h-2zM992.74 470.44h2v2h-2zM992.74 459.43h2v2h-2zM992.74 448.42h2v2h-2zM992.74 437.41h2v2h-2zM992.74 426.39h2v2h-2zM992.74 415.38h2v2h-2zM992.74 404.37h2v2h-2zM992.74 393.36h2v2h-2zM992.74 382.34h2v2h-2zM992.74 371.33h2v2h-2zM992.74 360.32h2v2h-2zM992.74 349.31h2v2h-2zM992.74 338.29h2v2h-2zM992.74 327.28h2v2h-2zM992.74 316.27h2v2h-2zM992.74 305.26h2v2h-2zM992.74 294.24h2v2h-2zM992.74 283.23h2v2h-2zM992.74 272.22h2v2h-2zM992.74 261.21h2v2h-2zM992.74 250.19h2v2h-2zM992.74 239.18h2v2h-2zM992.74 228.17h2v2h-2zM992.74 217.16h2v2h-2zM992.74 206.14h2v2h-2zM992.74 195.13h2v2h-2zM992.74 184.12h2v2h-2zM992.74 173.11h2v2h-2zM1005.41 602.59h2v2h-2zM1005.41 591.58h2v2h-2zM1005.41 580.57h2v2h-2zM1005.41 569.56h2v2h-2zM1005.41 558.54h2v2h-2zM1005.41 547.53h2v2h-2zM1005.41 536.52h2v2h-2zM1005.41 525.51h2v2h-2zM1005.41 514.49h2v2h-2zM1005.41 503.48h2v2h-2zM1005.41 492.47h2v2h-2zM1005.41 481.46h2v2h-2zM1005.41 470.44h2v2h-2zM1005.41 459.43h2v2h-2zM1005.41 448.42h2v2h-2zM1005.41 437.41h2v2h-2zM1005.41 426.39h2v2h-2zM1005.41 415.38h2v2h-2zM1005.41 404.37h2v2h-2zM1005.41 393.36h2v2h-2zM1005.41 382.34h2v2h-2zM1005.41 371.33h2v2h-2zM1005.41 360.32h2v2h-2zM1005.41 349.31h2v2h-2zM1005.41 338.29h2v2h-2zM1005.41 327.28h2v2h-2zM1005.41 316.27h2v2h-2zM1005.41 305.26h2v2h-2zM1005.41 294.24h2v2h-2zM1005.41 283.23h2v2h-2zM1005.41 272.22h2v2h-2zM1005.41 261.21h2v2h-2zM1005.41 250.19h2v2h-2zM1005.41 239.18h2v2h-2zM1005.41 228.17h2v2h-2zM1005.41 217.16h2v2h-2zM1005.41 206.14h2v2h-2zM1005.41 195.13h2v2h-2zM1005.41 184.12h2v2h-2zM1005.41 173.11h2v2h-2zM1018.07 602.59h2v2h-2zM1018.07 591.58h2v2h-2zM1018.07 580.57h2v2h-2zM1018.07 569.56h2v2h-2zM1018.07 558.54h2v2h-2zM1018.07 547.53h2v2h-2zM1018.07 536.52h2v2h-2zM1018.07 525.51h2v2h-2zM1018.07 514.49h2v2h-2zM1018.07 503.48h2v2h-2zM1018.07 492.47h2v2h-2zM1018.07 481.46h2v2h-2zM1018.07 470.44h2v2h-2zM1018.07 459.43h2v2h-2zM1018.07 448.42h2v2h-2zM1018.07 437.41h2v2h-2zM1018.07 426.39h2v2h-2zM1018.07 415.38h2v2h-2zM1018.07 404.37h2v2h-2zM1018.07 393.36h2v2h-2zM1018.07 382.34h2v2h-2zM1018.07 371.33h2v2h-2zM1018.07 360.32h2v2h-2zM1018.07 349.31h2v2h-2zM1018.07 338.29h2v2h-2zM1018.07 327.28h2v2h-2zM1018.07 316.27h2v2h-2zM1018.07 305.26h2v2h-2zM1018.07 294.24h2v2h-2zM1018.07 283.23h2v2h-2zM1018.07 272.22h2v2h-2zM1018.07 261.21h2v2h-2zM1018.07 250.19h2v2h-2zM1018.07 239.18h2v2h-2zM1018.07 228.17h2v2h-2zM1018.07 217.16h2v2h-2zM1018.07 206.14h2v2h-2zM1018.07 195.13h2v2h-2zM1018.07 184.12h2v2h-2zM1018.07 173.11h2v2h-2zM1030.73 602.59h2v2h-2zM1030.73 591.58h2v2h-2zM1030.73 580.57h2v2h-2zM1030.73 569.56h2v2h-2zM1030.73 558.54h2v2h-2zM1030.73 547.53h2v2h-2zM1030.73 536.52h2v2h-2zM1030.73 525.51h2v2h-2zM1030.73 514.49h2v2h-2zM1030.73 503.48h2v2h-2zM1030.73 492.47h2v2h-2zM1030.73 481.46h2v2h-2zM1030.73 470.44h2v2h-2zM1030.73 459.43h2v2h-2zM1030.73 448.42h2v2h-2zM1030.73 437.41h2v2h-2zM1030.73 426.39h2v2h-2zM1030.73 415.38h2v2h-2zM1030.73 404.37h2v2h-2zM1030.73 393.36h2v2h-2zM1030.73 382.34h2v2h-2zM1030.73 371.33h2v2h-2zM1030.73 360.32h2v2h-2zM1030.73 349.31h2v2h-2zM1030.73 338.29h2v2h-2zM1030.73 327.28h2v2h-2zM1030.73 316.27h2v2h-2zM1030.73 305.26h2v2h-2zM1030.73 294.24h2v2h-2zM1030.73 283.23h2v2h-2zM1030.73 272.22h2v2h-2zM1030.73 261.21h2v2h-2zM1030.73 250.19h2v2h-2zM1030.73 239.18h2v2h-2zM1030.73 228.17h2v2h-2zM1030.73 217.16h2v2h-2zM1030.73 206.14h2v2h-2zM1030.73 195.13h2v2h-2zM1030.73 184.12h2v2h-2zM1030.73 173.11h2v2h-2zM1043.40 602.59h2v2h-2zM1043.40 591.58h2v2h-2zM1043.40 580.57h2v2h-2zM1043.40 569.56h2v2h-2zM1043.40 558.54h2v2h-2zM1043.40 547.53h2v2h-2zM1043.40 536.52h2v2h-2zM1043.40 525.51h2v2h-2zM1043.40 514.49h2v2h-2zM1043.40 503.48h2v2h-2zM1043.40 492.47h2v2h-2zM1043.40 481.46h2v2h-2zM1043.40 470.44h2v2h-2zM1043.40 459.43h2v2h-2zM1043.40 448.42h2v2h-2zM1043.40 437.41h2v2h-2zM1043.40 426.39h2v2h-2zM1043.40 415.38h2v2h-2zM1043.40 404.37h2v2h-2zM1043.40 393.36h2v2h-2zM1043.40 382.34h2v2h-2zM1043.40 371.33h2v2h-2zM1043.40 360.32h2v2h-2zM1043.40 349.31h2v2h-2zM1043.40 338.29h2v2h-2zM1043.40 327.28h2v2h-2zM1043.40 316.27h2v2h-2zM1043.40 305.26h2v2h-2zM1043.40 294.24h2v2h-2zM1043.40 283.23h2v2h-2zM1043.40 272.22h2v2h-2zM1043.40 261.21h2v2h-2zM1043.40 250.19h2v2h-2zM1043.40 239.18h2v2h-2zM1043.40 228.17h2v2h-2zM1043.40 217.16h2v2h-2zM1043.40 206.14h2v2h-2zM1043.40 195.13h2v2h-2zM1043.40 184.12h2v2h-2zM1043.40 173.11h2v2h-2zM1056.06 602.59h2v2h-2zM1056.06 591.58h2v2h-2zM1056.06 580.57h2v2h-2zM1056.06 569.56h2v2h-2zM1056.06 558.54h2v2h-2zM1056.06 547.53h2v2h-2zM1056.06 536.52h2v2h-2zM1056.06 525.51h2v2h-2zM1056.06 514.49h2v2h-2zM1056.06 503.48h2v2h-2zM1056.06 492.47h2v2h-2zM1056.06 481.46h2v2h-2zM1056.06 470.44h2v2h-2zM1056.06 459.43h2v2h-2zM1056.06 448.42h2v2h-2zM1056.06 437.41h2v2h-2zM1056.06 426.39h2v2h-2zM1056.06 415.38h2v2h-2zM1056.06 404.37h2v2h-2zM1056.06 393.36h2v2h-2zM1056.06 382.34h2v2h-2zM1056.06 371.33h2v2h-2zM1056.06 360.32h2v2h-2zM1056.06 349.31h2v2h-2zM1056.06 338.29h2v2h-2zM1056.06 327.28h2v2h-2zM1056.06 316.27h2v2h-2zM1056.06 305.26h2v2h-2zM1056.06 294.24h2v2h-2zM1056.06 283.23h2v2h-2zM1056.06 272.22h2v2h-2zM1056.06 261.21h2v2h-2zM1056.06 250.19h2v2h-2zM1056.06 239.18h2v2h-2zM1056.06 228.17h2v2h-2zM1056.06 217.16h2v2h-2zM1056.06 206.14h2v2h-2zM1056.06 195.13h2v2h-2zM1056.06 184.12h2v2h-2zM1056.06 173.11h2v2h-2zM1068.72 602.59h2v2h-2zM1068.72 591.58h2v2h-2zM1068.72 580.57h2v2h-2zM1068.72 569.56h2v2h-2zM1068.72 558.54h2v2h-2zM1068.72 547.53h2v2h-2zM1068.72 536.52h2v2h-2zM1068.72 525.51h2v2h-2zM1068.72 514.49h2v2h-2zM1068.72 503.48h2v2h-2zM1068.72 492.47h2v2h-2zM1068.72 481.46h2v2h-2zM1068.72 470.44h2v2h-2zM1068.72 459.43h2v2h-2zM1068.72 448.42h2v2h-2zM1068.72 437.41h2v2h-2zM1068.72 426.39h2v2h-2zM1068.72 415.38h2v2h-2zM1068.72 404.37h2v2h-2zM1068.72 393.36h2v2h-2zM1068.72 382.34h2v2h-2zM1068.72 371.33h2v2h-2zM1068.72 360.32h2v2h-2zM1068.72 349.31h2v2h-2zM1068.72 338.29h2v2h-2zM1068.72 327.28h2v2h-2zM1068.72 316.27h2v2h-2zM1068.72 305.26h2v2h-2zM1068.72 294.24h2v2h-2zM1068.72 283.23h2v2h-2zM1068.72 272.22h2v2h-2zM1068.72 261.21h2v2h-2zM1068.72 250.19h2v2h-2zM1068.72 239.18h2v2h-2zM1068.72 228.17h2v2h-2zM1068.72 217.16h2v2h-2zM1068.72 206.14h2v2h-2zM1068.72 195.13h2v2h-2zM1068.72 184.12h2v2h-2zM1068.72 173.11h2v2h-2zM1081.38 602.59h2v2h-2zM1081.38 591.58h2v2h-2zM1081.38 580.57h2v2h-2zM1081.38 569.56h2v2h-2zM1081.38 558.54h2v2h-2zM1081.38 547.53h2v2h-2zM1081.38 536.52h2v2h-2zM1081.38 525.51h2v2h-2zM1081.38 514.49h2v2h-2zM1081.38 503.48h2v2h-2zM1081.38 492.47h2v2h-2zM1081.38 481.46h2v2h-2zM1081.38 470.44h2v2h-2zM1081.38 459.43h2v2h-2zM1081.38 448.42h2v2h-2zM1081.38 437.41h2v2h-2zM1081.38 426.39h2v2h-2zM1081.38 415.38h2v2h-2zM1081.38 404.37h2v2h-2zM1081.38 393.36h2v2h-2zM1081.38 382.34h2v2h-2zM1081.38 371.33h2v2h-2zM1081.38 360.32h2v2h-2zM1081.38 349.31h2v2h-2zM1081.38 338.29h2v2h-2zM1081.38 327.28h2v2h-2zM1081.38 316.27h2v2h-2zM1081.38 305.26h2v2h-2zM1081.38 294.24h2v2h-2zM1081.38 283.23h2v2h-2zM1081.38 272.22h2v2h-2zM1081.38 261.21h2v2h-2zM1081.38 250.19h2v2h-2zM1081.38 239.18h2v2h-2zM1081.38 228.17h2v2h-2zM1081.38 217.16h2v2h-2zM1081.38 206.14h2v2h-2zM1081.38 195.13h2v2h-2zM1081.38 184.12h2v2h-2zM1081.38 173.11h2v2h-2zM1094.05 602.59h2v2h-2zM1094.05 591.58h2v2h-2zM1094.05 580.57h2v2h-2zM1094.05 569.56h2v2h-2zM1094.05 558.54h2v2h-2zM1094.05 547.53h2v2h-2zM1094.05 536.52h2v2h-2zM1094.05 525.51h2v2h-2zM1094.05 514.49h2v2h-2zM1094.05 503.48h2v2h-2zM1094.05 492.47h2v2h-2zM1094.05 481.46h2v2h-2zM1094.05 470.44h2v2h-2zM1094.05 459.43h2v2h-2zM1094.05 448.42h2v2h-2zM1094.05 437.41h2v2h-2zM1094.05 426.39h2v2h-2zM1094.05 415.38h2v2h-2zM1094.05 404.37h2v2h-2zM1094.05 393.36h2v2h-2zM1094.05 382.34h2v2h-2zM1094.05 371.33h2v2h-2zM1094.05 360.32h2v2h-2zM1094.05 349.31h2v2h-2zM1094.05 338.29h2v2h-2zM1094.05 327.28h2v2h-2zM1094.05 316.27h2v2h-2zM1094.05 305.26h2v2h-2zM1094.05 294.24h2v2h-2zM1094.05 283.23h2v2h-2zM1094.05 272.22h2v2h-2zM1094.05 261.21h2v2h-2zM1094.05 250.19h2v2h-2zM1094.05 239.18h2v2h-2zM1094.05 228.17h2v2h-2zM1094.05 217.16h2v2h-2zM1094.05 206.14h2v2h-2zM1094.05 195.13h2v2h-2zM1094.05 184.12h2v2h-2zM1094.05 173.11h2v2h-2zM1106.71 602.59h2v2h-2zM1106.71 591.58h2v2h-2zM1106.71 580.57h2v2h-2zM1106.71 569.56h2v2h-2zM1106.71 558.54h2v2h-2zM1106.71 547.53h2v2h-2zM1106.71 536.52h2v2h-2zM1106.71 525.51h2v2h-2zM1106.71 514.49h2v2h-2zM1106.71 503.48h2v2h-2zM1106.71 492.47h2v2h-2zM1106.71 481.46h2v2h-2zM1106.71 470.44h2v2h-2zM1106.71 459.43h2v2h-2zM1106.71 448.42h2v2h-2zM1106.71 437.41h2v2h-2zM1106.71 426.39h2v2h-2zM1106.71 415.38h2v2h-2zM1106.71 404.37h2v2h-2zM1106.71 393.36h2v2h-2zM1106.71 382.34h2v2h-2zM1106.71 371.33h2v2h-2zM1106.71 360.32h2v2h-2zM1106.71 349.31h2v2h-2zM1106.71 338.29h2v2h-2zM1106.71 327.28h2v2h-2zM1106.71 316.27h2v2h-2zM1106.71 305.26h2v2h-2zM1106.71 294.24h2v2h-2zM1106.71 283.23h2v2h-2zM1106.71 272.22h2v2h-2zM1106.71 261.21h2v2h-2zM1106.71 250.19h2v2h-2zM1106.71 239.18h2v2h-2zM1106.71 228.17h2v2h-2zM1106.71 217.16h2v2h-2zM1106.71 206.14h2v2h-2zM1106.71 195.13h2v2h-2zM1106.71 184.12h2v2h-2zM1106.71 173.11h2v2h-2zM1119.37 602.59h2v2h-2zM1119.37 591.58h2v2h-2zM1119.37 580.57h2v2h-2zM1119.37 569.56h2v2h-2zM1119.37 558.54h2v2h-2zM1119.37 547.53h2v2h-2zM1119.37 536.52h2v2h-2zM1119.37 525.51h2v2h-2zM1119.37 514.49h2v2h-2zM1119.37 503.48h2v2h-2zM1119.37 492.47h2v2h-2zM1119.37 481.46h2v2h-2zM1119.37 470.44h2v2h-2zM1119.37 459.43h2v2h-2zM1119.37 448.42h2v2h-2zM1119.37 437.41h2v2h-2zM1119.37 426.39h2v2h-2zM1119.37 415.38h2v2h-2zM1119.37 404.37h2v2h-2zM1119.37 393.36h2v2h-2zM1119.37 382.34h2v2h-2zM1119.37 371.33h2v2h-2zM1119.37 360.32h2v2h-2zM1119.37 349.31h2v2h-2zM1119.37 338.29h2v2h-2zM1119.37 327.28h2v2h-2zM1119.37 316.27h2v2h-2zM1119.37 305.26h2v2h-2zM1119.37 294.24h2v2h-2zM1119.37 283.23h2v2h-2zM1119.37 272.22h2v2h-2zM1119.37 261.21h2v2h-2zM1119.37 250.19h2v2h-2zM1119.37 239.18h2v2h-2zM1119.37 228.17h2v2h-2zM1119.37 217.16h2v2h-2zM1119.37 206.14h2v2h-2zM1119.37 195.13h2v2h-2zM1119.37 184.12h2v2h-2zM1119.37 173.11h2v2h-2zM1132.04 602.59h2v2h-2zM1132.04 591.58h2v2h-2zM1132.04 580.57h2v2h-2zM1132.04 569.56h2v2h-2zM1132.04 558.54h2v2h-2zM1132.04 547.53h2v2h-2zM1132.04 536.52h2v2h-2zM1132.04 525.51h2v2h-2zM1132.04 514.49h2v2h-2zM1132.04 503.48h2v2h-2zM1132.04 492.47h2v2h-2zM1132.04 481.46h2v2h-2zM1132.04 470.44h2v2h-2zM1132.04 459.43h2v2h-2zM1132.04 448.42h2v2h-2zM1132.04 437.41h2v2h-2zM1132.04 426.39h2v2h-2zM1132.04 415.38h2v2h-2zM1132.04 404.37h2v2h-2zM1132.04 393.36h2v2h-2zM1132.04 382.34h2v2h-2zM1132.04 371.33h2v2h-2zM1132.04 360.32h2v2h-2zM1132.04 349.31h2v2h-2zM1132.04 338.29h2v2h-2zM1132.04 327.28h2v2h-2zM1132.04 316.27h2v2h-2zM1132.04 305.26h2v2h-2zM1132.04 294.24h2v2h-2zM1132.04 283.23h2v2h-2zM1132.04 272.22h2v2h-2zM1132.04 261.21h2v2h-2zM1132.04 250.19h2v2h-2zM1132.04 239.18h2v2h-2zM1132.04 228.17h2v2h-2zM1132.04 217.16h2v2h-2zM1132.04 206.14h2v2h-2zM1132.04 195.13h2v2h-2zM1132.04 184.12h2v2h-2zM1132.04 173.11h2v2h-2zM1144.70 602.59h2v2h-2zM1144.70 591.58h2v2h-2zM1144.70 580.57h2v2h-2zM1144.70 569.56h2v2h-2zM1144.70 558.54h2v2h-2zM1144.70 547.53h2v2h-2zM1144.70 536.52h2v2h-2zM1144.70 525.51h2v2h-2zM1144.70 514.49h2v2h-2zM1144.70 503.48h2v2h-2zM1144.70 492.47h2v2h-2zM1144.70 481.46h2v2h-2zM1144.70 470.44h2v2h-2zM1144.70 459.43h2v2h-2zM1144.70 448.42h2v2h-2zM1144.70 437.41h2v2h-2zM1144.70 426.39h2v2h-2zM1144.70 415.38h2v2h-2zM1144.70 404.37h2v2h-2zM1144.70 393.36h2v2h-2zM1144.70 382.34h2v2h-2zM1144.70 371.33h2v2h-2zM1144.70 360.32h2v2h-2zM1144.70 349.31h2v2h-2zM1144.70 338.29h2v2h-2zM1144.70 327.28h2v2h-2zM1144.70 316.27h2v2h-2zM1144.70 305.26h2v2h-2zM1144.70 294.24h2v2h-2zM1144.70 283.23h2v2h-2zM1144.70 272.22h2v2h-2zM1144.70 261.21h2v2h-2zM1144.70 250.19h2v2h-2zM1144.70 239.18h2v2h-2zM1144.70 228.17h2v2h-2zM1144.70 217.16h2v2h-2zM1144.70 206.14h2v2h-2zM1144.70 195.13h2v2h-2zM1144.70 184.12h2v2h-2zM1144.70 173.11h2v2h-2zM1157.36 602.59h2v2h-2zM1157.36 591.58h2v2h-2zM1157.36 580.57h2v2h-2zM1157.36 569.56h2v2h-2zM1157.36 558.54h2v2h-2zM1157.36 547.53h2v2h-2zM1157.36 536.52h2v2h-2zM1157.36 525.51h2v2h-2zM1157.36 514.49h2v2h-2zM1157.36 503.48h2v2h-2zM1157.36 492.47h2v2h-2zM1157.36 481.46h2v2h-2zM1157.36 470.44h2v2h-2zM1157.36 459.43h2v2h-2zM1157.36 448.42h2v2h-2zM1157.36 437.41h2v2h-2zM1157.36 426.39h2v2h-2zM1157.36 415.38h2v2h-2zM1157.36 404.37h2v2h-2zM1157.36 393.36h2v2h-2zM1157.36 382.34h2v2h-2zM1157.36 371.33h2v2h-2zM1157.36 360.32h2v2h-2zM1157.36 349.31h2v2h-2zM1157.36 338.29h2v2h-2zM1157.36 327.28h2v2h-2zM1157.36 316.27h2v2h-2zM1157.36 305.26h2v2h-2zM1157.36 294.24h2v2h-2zM1157.36 283.23h2v2h-2zM1157.36 272.22h2v2h-2zM1157.36 261.21h2v2h-2zM1157.36 250.19h2v2h-2zM1157.36 239.18h2v2h-2zM1157.36 228.17h2v2h-2zM1157.36 217.16h2v2h-2zM1157.36 206.14h2v2h-2zM1157.36 195.13h2v2h-2zM1157.36 184.12h2v2h-2zM1157.36 173.11h2v2h-2zM1170.03 602.59h2v2h-2zM1170.03 591.58h2v2h-2zM1170.03 580.57h2v2h-2zM1170.03 569.56h2v2h-2zM1170.03 558.54h2v2h-2zM1170.03 547.53h2v2h-2zM1170.03 536.52h2v2h-2zM1170.03 525.51h2v2h-2zM1170.03 514.49h2v2h-2zM1170.03 503.48h2v2h-2zM1170.03 492.47h2v2h-2zM1170.03 481.46h2v2h-2zM1170.03 470.44h2v2h-2zM1170.03 459.43h2v2h-2zM1170.03 448.42h2v2h-2zM1170.03 437.41h2v2h-2zM1170.03 426.39h2v2h-2zM1170.03 415.38h2v2h-2zM1170.03 404.37h2v2h-2zM1170.03 393.36h2v2h-2zM1170.03 382.34h2v2h-2zM1170.03 371.33h2v2h-2zM1170.03 360.32h2v2h-2zM1170.03 349.31h2v2h-2zM1170.03 338.29h2v2h-2zM1170.03 327.28h2v2h-2zM1170.03 316.27h2v2h-2zM1170.03 305.26h2v2h-2zM1170.03 294.24h2v2h-2zM1170.03 283.23h2v2h-2zM1170.03 272.22h2v2h-2zM1170.03 261.21h2v2h-2zM1170.03 250.19h2v2h-2zM1170.03 239.18h2v2h-2zM1170.03 228.17h2v2h-2zM1170.03 217.16h2v2h-2zM1170.03 206.14h2v2h-2zM1170.03 195.13h2v2h-2zM1170.03 184.12h2v2h-2zM1170.03 173.11h2v2h-2zM1182.69 602.59h2v2h-2zM1182.69 591.58h2v2h-2zM1182.69 580.57h2v2h-2zM1182.69 569.56h2v2h-2zM1182.69 558.54h2v2h-2zM1182.69 547.53h2v2h-2zM1182.69 536.52h2v2h-2zM1182.69 525.51h2v2h-2zM1182.69 514.49h2v2h-2zM1182.69 503.48h2v2h-2zM1182.69 492.47h2v2h-2zM1182.69 481.46h2v2h-2zM1182.69 470.44h2v2h-2zM1182.69 459.43h2v2h-2zM1182.69 448.42h2v2h-2zM1182.69 437.41h2v2h-2zM1182.69 426.39h2v2h-2zM1182.69 415.38h2v2h-2zM1182.69 404.37h2v2h-2zM1182.69 393.36h2v2h-2zM1182.69 382.34h2v2h-2zM1182.69 371.33h2v2h-2zM1182.69 360.32h2v2h-2zM1182.69 349.31h2v2h-2zM1182.69 338.29h2v2h-2zM1182.69 327.28h2v2h-2zM1182.69 316.27h2v2h-2zM1182.69 305.26h2v2h-2zM1182.69 294.24h2v2h-2zM1182.69 283.23h2v2h-2zM1182.69 272.22h2v2h-2zM1182.69 261.21h2v2h-2zM1182.69 250.19h2v2h-2zM1182.69 239.18h2v2h-2zM1182.69 228.17h2v2h-2zM1182.69 217.16h2v2h-2zM1182.69 206.14h2v2h-2zM1182.69 195.13h2v2h-2zM1182.69 184.12h2v2h-2zM1182.69 173.11h2v2h-2z" fill="#c8c8c8"/><rect x="677" y="163" width="519" height="452" fill="none" stroke="#d8d8d8" stroke-width="2"/><line x1="676.5" y1="161.5" x2="1196" y2="161.5" stroke="#c8c8c8" stroke-width="1" stroke-dasharray="2 5"/><line x1="678.5" y1="168" x2="678.5" y2="612" stroke="#c8c8c8" stroke-width="1" stroke-dasharray="2 5"/><line x1="683.5" y1="614" x2="683.5" y2="608" stroke="#d8d8d8" stroke-width="1.5"/><line x1="683.5" y1="163" x2="683.5" y2="169" stroke="#d8d8d8" stroke-width="1.5"/><line x1="810.1" y1="614" x2="810.1" y2="608" stroke="#d8d8d8" stroke-width="1.5"/><line x1="810.1" y1="163" x2="810.1" y2="169" stroke="#d8d8d8" stroke-width="1.5"/><line x1="936.8" y1="614" x2="936.8" y2="608" stroke="#d8d8d8" stroke-width="1.5"/><line x1="936.8" y1="163" x2="936.8" y2="169" stroke="#d8d8d8" stroke-width="1.5"/><line x1="1063.4" y1="614" x2="1063.4" y2="608" stroke="#d8d8d8" stroke-width="1.5"/><line x1="1063.4" y1="163" x2="1063.4" y2="169" stroke="#d8d8d8" stroke-width="1.5"/><line x1="1190.0" y1="614" x2="1190.0" y2="608" stroke="#d8d8d8" stroke-width="1.5"/><line x1="1190.0" y1="163" x2="1190.0" y2="169" stroke="#d8d8d8" stroke-width="1.5"/><line x1="677" y1="609.5" x2="683" y2="609.5" stroke="#d8d8d8" stroke-width="1.5"/><line x1="1196" y1="609.5" x2="1189" y2="609.5" stroke="#d8d8d8" stroke-width="1.5"/><line x1="677" y1="554.4" x2="683" y2="554.4" stroke="#d8d8d8" stroke-width="1.5"/><line x1="1196" y1="554.4" x2="1189" y2="554.4" stroke="#d8d8d8" stroke-width="1.5"/><line x1="677" y1="499.4" x2="683" y2="499.4" stroke="#d8d8d8" stroke-width="1.5"/><line x1="1196" y1="499.4" x2="1189" y2="499.4" stroke="#d8d8d8" stroke-width="1.5"/><line x1="677" y1="444.3" x2="683" y2="444.3" stroke="#d8d8d8" stroke-width="1.5"/><line x1="1196" y1="444.3" x2="1189" y2="444.3" stroke="#d8d8d8" stroke-width="1.5"/><line x1="677" y1="389.2" x2="683" y2="389.2" stroke="#d8d8d8" stroke-width="1.5"/><line x1="1196" y1="389.2" x2="1189" y2="389.2" stroke="#d8d8d8" stroke-width="1.5"/><line x1="677" y1="334.2" x2="683" y2="334.2" stroke="#d8d8d8" stroke-width="1.5"/><line x1="1196" y1="334.2" x2="1189" y2="334.2" stroke="#d8d8d8" stroke-width="1.5"/><line x1="677" y1="279.1" x2="683" y2="279.1" stroke="#d8d8d8" stroke-width="1.5"/><line x1="1196" y1="279.1" x2="1189" y2="279.1" stroke="#d8d8d8" stroke-width="1.5"/><line x1="677" y1="224.1" x2="683" y2="224.1" stroke="#d8d8d8" stroke-width="1.5"/><line x1="1196" y1="224.1" x2="1189" y2="224.1" stroke="#d8d8d8" stroke-width="1.5"/><line x1="677" y1="169.0" x2="683" y2="169.0" stroke="#d8d8d8" stroke-width="1.5"/><line x1="1196" y1="169.0" x2="1189" y2="169.0" stroke="#d8d8d8" stroke-width="1.5"/><rect x="686.3" y="171.0" width="7" height="7" rx="3.5" fill="#edb120"/><rect x="699.0" y="171.0" width="7" height="7" rx="3.5" fill="#77ac30"/><rect x="711.7" y="171.0" width="7" height="7" rx="3.5" fill="#4dbeee"/><rect x="724.3" y="171.0" width="7" height="7" rx="3.5" fill="#a2142f"/><rect x="737.0" y="171.0" width="7" height="7" rx="3.5" fill="#0072bd"/><rect x="749.6" y="171.0" width="7" height="7" rx="3.5" fill="#d95319"/><rect x="762.3" y="171.0" width="7" height="7" rx="3.5" fill="#edb120"/><rect x="775.0" y="171.0" width="7" height="7" rx="3.5" fill="#7e2f8e"/><rect x="685.0" y="269.5" width="15" height="9" rx="3.5" fill="#77ac30"/><rect x="688.0" y="284.0" width="12" height="7" rx="3.5" fill="#d95319"/><rect x="749.0" y="269.5" width="12" height="9" rx="3.5" fill="#4dbeee"/><rect x="754.5" y="271.5" width="12" height="8" rx="3.5" fill="#edb120"/><rect x="812.5" y="268.5" width="15" height="10" rx="3.5" fill="#a2142f"/><rect x="877.5" y="267.0" width="9" height="10" rx="3.5" fill="#0072bd"/><rect x="879.5" y="262.0" width="5" height="8" rx="3.5" fill="#7e2f8e"/><rect x="939.0" y="269.0" width="8" height="7" rx="3.5" fill="#77ac30"/><rect x="681.0" y="323.5" width="11" height="10" rx="3.5" fill="#4dbeee"/></svg>
<div class="t" style="left:684.83px;top:159.50px;font-size:13px;line-height:13px;color:#dcdcdc;font-weight:normal;transform:scaleY(1.16);transform-origin:0 85%;">1-1</div>
<div class="t" style="left:697.49px;top:159.50px;font-size:13px;line-height:13px;color:#dcdcdc;font-weight:normal;transform:scaleY(1.16);transform-origin:0 85%;">1-2</div>
<div class="t" style="left:710.16px;top:159.50px;font-size:13px;line-height:13px;color:#dcdcdc;font-weight:normal;transform:scaleY(1.16);transform-origin:0 85%;">1-3</div>
<div class="t" style="left:722.82px;top:159.50px;font-size:13px;line-height:13px;color:#dcdcdc;font-weight:normal;transform:scaleY(1.16);transform-origin:0 85%;">1-4</div>
<div class="t" style="left:735.48px;top:159.50px;font-size:13px;line-height:13px;color:#dcdcdc;font-weight:normal;transform:scaleY(1.16);transform-origin:0 85%;">1-5</div>
<div class="t" style="left:748.15px;top:159.50px;font-size:13px;line-height:13px;color:#dcdcdc;font-weight:normal;transform:scaleY(1.16);transform-origin:0 85%;">1-6</div>
<div class="t" style="left:760.81px;top:159.50px;font-size:13px;line-height:13px;color:#dcdcdc;font-weight:normal;transform:scaleY(1.16);transform-origin:0 85%;">1-7</div>
<div class="t" style="left:773.47px;top:159.50px;font-size:13px;line-height:13px;color:#dcdcdc;font-weight:normal;transform:scaleY(1.16);transform-origin:0 85%;">1-8</div>
<div class="t" style="left:684.80px;top:260.73px;font-size:14.5px;line-height:14.5px;color:#dcdcdc;font-weight:normal;transform:scaleY(1.16);transform-origin:0 85%;">10-1</div>
<div class="t" style="left:684.00px;top:278.73px;font-size:14.5px;line-height:14.5px;color:#dcdcdc;font-weight:normal;transform:scaleY(1.16);transform-origin:0 85%;">40-40</div>
<div class="t" style="left:748.00px;top:260.73px;font-size:14.5px;line-height:14.5px;color:#dcdcdc;font-weight:normal;transform:scaleY(1.16);transform-origin:0 85%;">10-6</div>
<div class="t" style="left:754.50px;top:266.03px;font-size:14.5px;line-height:14.5px;color:#dcdcdc;font-weight:normal;transform:scaleY(1.16);transform-origin:0 85%;">40-40</div>
<div class="t" style="left:811.50px;top:261.03px;font-size:14.5px;line-height:14.5px;color:#dcdcdc;font-weight:normal;transform:scaleY(1.16);transform-origin:0 85%;">10-11</div>
<div class="t" style="left:875.50px;top:260.73px;font-size:14.5px;line-height:14.5px;color:#dcdcdc;font-weight:normal;transform:scaleY(1.16);transform-origin:0 85%;">10-16</div>
<div class="t" style="left:875.50px;top:256.23px;font-size:14.5px;line-height:14.5px;color:#dcdcdc;font-weight:normal;transform:scaleY(1.16);transform-origin:0 85%;">1-1</div>
<div class="t" style="left:938.50px;top:260.73px;font-size:14.5px;line-height:14.5px;color:#dcdcdc;font-weight:normal;transform:scaleY(1.16);transform-origin:0 85%;">10-21</div>
<div class="t" style="left:684.00px;top:316.73px;font-size:14.5px;line-height:14.5px;color:#dcdcdc;font-weight:normal;transform:scaleY(1.16);transform-origin:0 85%;">15-1</div>
<div class="t" style="left:537.50px;width:800px;text-align:center;top:137.15px;font-size:21.2px;line-height:21.2px;color:#e4e4e4;font-weight:normal;-webkit-text-stroke:0.45px #e4e4e4;">Substrate overview</div>
<div class="t" style="left:-129.20px;width:800px;text-align:right;top:599.20px;font-size:20.2px;line-height:20.2px;color:#f0f0f0;font-weight:normal;">-2000</div>
<div class="t" style="left:-129.20px;width:800px;text-align:right;top:544.14px;font-size:20.2px;line-height:20.2px;color:#f0f0f0;font-weight:normal;">-1500</div>
<div class="t" style="left:-129.20px;width:800px;text-align:right;top:489.08px;font-size:20.2px;line-height:20.2px;color:#f0f0f0;font-weight:normal;">-1000</div>
<div class="t" style="left:-129.20px;width:800px;text-align:right;top:434.01px;font-size:20.2px;line-height:20.2px;color:#f0f0f0;font-weight:normal;">-500</div>
<div class="t" style="left:-129.20px;width:800px;text-align:right;top:378.95px;font-size:20.2px;line-height:20.2px;color:#f0f0f0;font-weight:normal;">0</div>
<div class="t" style="left:-129.20px;width:800px;text-align:right;top:323.89px;font-size:20.2px;line-height:20.2px;color:#f0f0f0;font-weight:normal;">500</div>
<div class="t" style="left:-129.20px;width:800px;text-align:right;top:268.83px;font-size:20.2px;line-height:20.2px;color:#f0f0f0;font-weight:normal;">1000</div>
<div class="t" style="left:-129.20px;width:800px;text-align:right;top:213.76px;font-size:20.2px;line-height:20.2px;color:#f0f0f0;font-weight:normal;">1500</div>
<div class="t" style="left:-129.20px;width:800px;text-align:right;top:158.70px;font-size:20.2px;line-height:20.2px;color:#f0f0f0;font-weight:normal;">2000</div>
<div class="t" style="left:284.30px;width:800px;text-align:center;top:625.30px;font-size:20.2px;line-height:20.2px;color:#f0f0f0;font-weight:normal;">-2000</div>
<div class="t" style="left:410.93px;width:800px;text-align:center;top:625.30px;font-size:20.2px;line-height:20.2px;color:#f0f0f0;font-weight:normal;">-1000</div>
<div class="t" style="left:537.56px;width:800px;text-align:center;top:625.30px;font-size:20.2px;line-height:20.2px;color:#f0f0f0;font-weight:normal;">0</div>
<div class="t" style="left:664.19px;width:800px;text-align:center;top:625.30px;font-size:20.2px;line-height:20.2px;color:#f0f0f0;font-weight:normal;">1000</div>
<div class="t" style="left:790.82px;width:800px;text-align:center;top:625.30px;font-size:20.2px;line-height:20.2px;color:#f0f0f0;font-weight:normal;">2000</div>
<div class="t" style="left:537.60px;width:800px;text-align:center;top:649.50px;font-size:20.2px;line-height:20.2px;color:#f0f0f0;font-weight:normal;">x  (&micro;m)</div>
<div class="t" style="left:499px;top:377.6px;width:200px;height:20px;text-align:center;font-size:20.6px;line-height:20px;color:#e6e6e6;transform:rotate(-90deg);">y  (&micro;m)</div>
<div style="position:absolute;left:24px;top:695px;width:364px;height:198px;box-sizing:border-box;border:2px solid #d8d8d8;"></div>
<div style="position:absolute;left:24px;top:721px;width:364px;height:2px;box-sizing:border-box;background:#d8d8d8;"></div>
<div class="t" style="left:30.00px;top:700.03px;font-size:16.5px;line-height:16.5px;color:#f0f0f0;font-weight:normal;">Grid</div>
<div class="t" style="left:51.20px;top:749.29px;font-size:19.5px;line-height:19.5px;color:#f0f0f0;font-weight:normal;">y</div>
<div class="t" style="left:49.40px;top:794.79px;font-size:19.5px;line-height:19.5px;color:#f0f0f0;font-weight:normal;">x</div>
<div style="position:absolute;left:88px;top:740px;width:68px;height:33px;box-sizing:border-box;border:2px solid #a0a0a0;"></div>
<div class="t" style="left:-278.00px;width:800px;text-align:center;top:747.29px;font-size:19.5px;line-height:19.5px;color:#f0f0f0;font-weight:normal;">40</div>
<div style="position:absolute;left:88px;top:786px;width:68px;height:33px;box-sizing:border-box;border:2px solid #a0a0a0;"></div>
<div class="t" style="left:-278.00px;width:800px;text-align:center;top:793.29px;font-size:19.5px;line-height:19.5px;color:#f0f0f0;font-weight:normal;">40</div>
<div class="t" style="left:166.10px;top:750.99px;font-size:19.5px;line-height:19.5px;color:#f0f0f0;font-weight:normal;">fields</div>
<div class="t" style="left:166.10px;top:794.79px;font-size:19.5px;line-height:19.5px;color:#f0f0f0;font-weight:normal;">fields</div>
<div style="position:absolute;left:246px;top:741px;width:67px;height:33px;box-sizing:border-box;border:2px solid #a0a0a0;"></div>
<div class="t" style="left:-120.50px;width:800px;text-align:center;top:748.29px;font-size:19.5px;line-height:19.5px;color:#f0f0f0;font-weight:normal;">100</div>
<div style="position:absolute;left:246px;top:785px;width:67px;height:33px;box-sizing:border-box;border:2px solid #a0a0a0;"></div>
<div class="t" style="left:-120.50px;width:800px;text-align:center;top:792.29px;font-size:19.5px;line-height:19.5px;color:#f0f0f0;font-weight:normal;">100</div>
<div class="t" style="left:332.00px;top:748.29px;font-size:19.5px;line-height:19.5px;color:#f0f0f0;font-weight:normal;">&micro;m</div>
<div class="t" style="left:332.00px;top:792.29px;font-size:19.5px;line-height:19.5px;color:#f0f0f0;font-weight:normal;">&micro;m</div>
<div style="position:absolute;left:88px;top:834px;width:153px;height:47px;box-sizing:border-box;border:2px solid #a0a0a0;border-radius:6px;"></div>
<div class="t" style="left:-235.50px;width:800px;text-align:center;top:846.19px;font-size:19.5px;line-height:19.5px;color:#f0f0f0;font-weight:normal;">Generate grid</div>
<div style="position:absolute;left:259px;top:834px;width:54px;height:47px;box-sizing:border-box;border:2px solid #a0a0a0;border-radius:6px;"></div>
<div class="t" style="left:-114.00px;width:800px;text-align:center;top:848.29px;font-size:19.5px;line-height:19.5px;color:#f0f0f0;font-weight:normal;"></div>
<svg style="position:absolute;left:276px;top:849px" width="20" height="18" viewBox="0 0 20 18"><rect x="3.9" y="4.6" width="12.4" height="9.8" rx="1.6" fill="none" stroke="#f0f0f0" stroke-width="1.4"/><path d="M11 3v3.6M9 12.6v3.6M2 8.5h4M14 9.5h4" stroke="#f0f0f0" stroke-width="1.2"/></svg>
<div style="position:absolute;left:24px;top:906px;width:364px;height:353px;box-sizing:border-box;border:1px solid #a0a0a0;border-bottom-width:2px;background:#1b1b1b;"></div>
<div style="position:absolute;left:25px;top:908px;width:336px;height:25px;box-sizing:border-box;background:#a6d8ff;"></div>
<div class="t" style="left:31.40px;top:912.03px;font-size:16.5px;line-height:16.5px;color:#3a3a3a;font-weight:normal;">BarsFormingCircle</div>
<div class="t" style="left:31.40px;top:937.03px;font-size:16.5px;line-height:16.5px;color:#f0f0f0;font-weight:normal;">Battery</div>
<div class="t" style="left:31.40px;top:962.03px;font-size:16.5px;line-height:16.5px;color:#f0f0f0;font-weight:normal;">Box</div>
<div class="t" style="left:31.40px;top:987.03px;font-size:16.5px;line-height:16.5px;color:#f0f0f0;font-weight:normal;">CSV</div>
<div class="t" style="left:31.40px;top:1012.03px;font-size:16.5px;line-height:16.5px;color:#f0f0f0;font-weight:normal;">CalibrationPillar</div>
<div class="t" style="left:31.40px;top:1037.03px;font-size:16.5px;line-height:16.5px;color:#f0f0f0;font-weight:normal;">Cylinder</div>
<div class="t" style="left:31.40px;top:1062.03px;font-size:16.5px;line-height:16.5px;color:#f0f0f0;font-weight:normal;">Demo3D</div>
<div class="t" style="left:31.40px;top:1087.03px;font-size:16.5px;line-height:16.5px;color:#f0f0f0;font-weight:normal;">DemoStructScript</div>
<div class="t" style="left:31.40px;top:1112.03px;font-size:16.5px;line-height:16.5px;color:#f0f0f0;font-weight:normal;">Helix</div>
<div class="t" style="left:31.40px;top:1137.03px;font-size:16.5px;line-height:16.5px;color:#f0f0f0;font-weight:normal;">Ladder</div>
<div class="t" style="left:31.40px;top:1162.03px;font-size:16.5px;line-height:16.5px;color:#f0f0f0;font-weight:normal;">Lattice1</div>
<div class="t" style="left:31.40px;top:1187.03px;font-size:16.5px;line-height:16.5px;color:#f0f0f0;font-weight:normal;">Lattice2</div>
<div class="t" style="left:31.40px;top:1212.03px;font-size:16.5px;line-height:16.5px;color:#f0f0f0;font-weight:normal;">Multirings</div>
<div class="t" style="left:31.40px;top:1237.03px;font-size:16.5px;line-height:16.5px;color:#f0f0f0;font-weight:normal;">Needle</div>
<div style="position:absolute;left:362px;top:907px;width:25px;height:350px;box-sizing:border-box;background:#f0f0f0;border-left:1px solid #fff;box-sizing:border-box;"></div>
<div style="position:absolute;left:364px;top:932px;width:21px;height:140px;box-sizing:border-box;background:#c0c0c0;"></div>
<div style="position:absolute;left:369px;top:917px;width:0;height:0;border-left:5.5px solid transparent;border-right:5.5px solid transparent;border-bottom:6px solid #a0a0a0;"></div>
<div style="position:absolute;left:369px;top:1241px;width:0;height:0;border-left:5.5px solid transparent;border-right:5.5px solid transparent;border-top:6px solid #505050;"></div>
<div style="position:absolute;left:138px;top:1271px;width:150px;height:46px;box-sizing:border-box;border:2px solid #a0a0a0;border-radius:6px;"></div>
<div class="t" style="left:-187.00px;width:800px;text-align:center;top:1283.89px;font-size:19.5px;line-height:19.5px;color:#f0f0f0;font-weight:normal;">Parameters</div>
<div style="position:absolute;left:421px;top:695px;width:248px;height:198px;box-sizing:border-box;border:2px solid #d8d8d8;"></div>
<div style="position:absolute;left:421px;top:721px;width:248px;height:2px;box-sizing:border-box;background:#d8d8d8;"></div>
<div class="t" style="left:427.30px;top:700.03px;font-size:16.5px;line-height:16.5px;color:#f0f0f0;font-weight:normal;">Collection position</div>
<div class="t" style="left:430.00px;top:743.19px;font-size:19.5px;line-height:19.5px;color:#f0f0f0;font-weight:normal;">row</div>
<div class="t" style="left:430.00px;top:792.19px;font-size:19.5px;line-height:19.5px;color:#f0f0f0;font-weight:normal;">column</div>
<div class="t" style="left:432.00px;top:838.99px;font-size:19.5px;line-height:19.5px;color:#f0f0f0;font-weight:normal;">chamber</div>
<div style="position:absolute;left:516px;top:738px;width:76px;height:32px;box-sizing:border-box;border:2px solid #a0a0a0;border-radius:6px;"></div>
<div class="t" style="left:524.40px;top:745.26px;font-size:18px;line-height:18px;color:#f0f0f0;font-weight:normal;">1</div>
<div style="position:absolute;left:567.9px;top:749.0px;width:0;height:0;border-left:6.5px solid transparent;border-right:6.5px solid transparent;border-top:10px solid #0a0505;"></div>
<div style="position:absolute;left:516px;top:787px;width:76px;height:32px;box-sizing:border-box;border:2px solid #a0a0a0;border-radius:6px;"></div>
<div class="t" style="left:524.40px;top:793.36px;font-size:18px;line-height:18px;color:#f0f0f0;font-weight:normal;">1</div>
<div style="position:absolute;left:567.9px;top:798.0px;width:0;height:0;border-left:6.5px solid transparent;border-right:6.5px solid transparent;border-top:10px solid #0a0505;"></div>
<div style="position:absolute;left:516px;top:835px;width:142px;height:32px;box-sizing:border-box;border:2px solid #a0a0a0;border-radius:6px;"></div>
<div class="t" style="left:523.00px;top:841.36px;font-size:18px;line-height:18px;color:#f0f0f0;font-weight:normal;">V3 - 15 mm</div>
<div style="position:absolute;left:633.5px;top:846.0px;width:0;height:0;border-left:6.5px solid transparent;border-right:6.5px solid transparent;border-top:10px solid #0a0505;"></div>
<div style="position:absolute;left:689px;top:683px;width:366px;height:219px;box-sizing:border-box;border:5px solid #ec1c24;"></div>
<div style="position:absolute;left:699px;top:695px;width:345px;height:198px;box-sizing:border-box;border:2px solid #d8d8d8;"></div>
<div style="position:absolute;left:699px;top:721px;width:345px;height:2px;box-sizing:border-box;background:#d8d8d8;"></div>
<div class="t" style="left:705.00px;top:699.83px;font-size:16.5px;line-height:16.5px;color:#f0f0f0;font-weight:normal;">Height map</div>
<div style="position:absolute;left:727px;top:742px;width:143px;height:44px;box-sizing:border-box;border:2px solid #a0a0a0;border-radius:6px;"></div>
<div class="t" style="left:398.50px;width:800px;text-align:center;top:753.69px;font-size:19.5px;line-height:19.5px;color:#f0f0f0;font-weight:normal;">Fetch</div>
<div style="position:absolute;left:885px;top:742px;width:141px;height:44px;box-sizing:border-box;border:2px solid #a0a0a0;border-radius:6px;"></div>
<div class="t" style="left:555.50px;width:800px;text-align:center;top:753.69px;font-size:19.5px;line-height:19.5px;color:#f0f0f0;font-weight:normal;">Load</div>
<div style="position:absolute;left:726px;top:811px;width:141px;height:44px;box-sizing:border-box;border:2px solid #a0a0a0;border-radius:6px;"></div>
<div class="t" style="left:396.50px;width:800px;text-align:center;top:823.19px;font-size:19.5px;line-height:19.5px;color:#f0f0f0;font-weight:normal;">Snap object</div>
<div style="position:absolute;left:883px;top:811px;width:140px;height:44px;box-sizing:border-box;border:2px solid #a0a0a0;border-radius:6px;"></div>
<div class="t" style="left:553.00px;width:800px;text-align:center;top:823.19px;font-size:19.5px;line-height:19.5px;color:#f0f0f0;font-weight:normal;">Clear</div>
<div style="position:absolute;left:1078px;top:698px;width:294px;height:406px;box-sizing:border-box;border:2px solid #d8d8d8;"></div>
<div style="position:absolute;left:1078px;top:724px;width:294px;height:2px;box-sizing:border-box;background:#d8d8d8;"></div>
<div class="t" style="left:1084.40px;top:703.63px;font-size:16.5px;line-height:16.5px;color:#f0f0f0;font-weight:normal;">Routing</div>
<div style="position:absolute;left:1117px;top:749px;width:201px;height:28px;box-sizing:border-box;border:2px solid #a0a0a0;border-radius:6px;"></div>
<div class="t" style="left:1124.60px;top:752.79px;font-size:19.5px;line-height:19.5px;color:#f0f0f0;font-weight:normal;">auto correct</div>
<div style="position:absolute;left:1293.7px;top:758.0px;width:0;height:0;border-left:6.5px solid transparent;border-right:6.5px solid transparent;border-top:10px solid #0a0505;"></div>
<div style="position:absolute;left:1117px;top:798px;width:96px;height:45px;box-sizing:border-box;border:2px solid #a0a0a0;border-radius:6px;"></div>
<div class="t" style="left:765.00px;width:800px;text-align:center;top:810.69px;font-size:19.5px;line-height:19.5px;color:#f0f0f0;font-weight:normal;">Apply</div>
<div style="position:absolute;left:1117px;top:869px;width:96px;height:45px;box-sizing:border-box;border:2px solid #a0a0a0;border-radius:6px;"></div>
<div class="t" style="left:765.00px;width:800px;text-align:center;top:881.69px;font-size:19.5px;line-height:19.5px;color:#f0f0f0;font-weight:normal;">Check</div>
<svg style="position:absolute;left:1236px;top:877px" width="32" height="32" viewBox="0 0 32 32"><defs><linearGradient id="led" x1="0" y1="0" x2="0" y2="1"><stop offset="0" stop-color="#d8d8d8"/><stop offset="0.25" stop-color="#9a9a9a"/><stop offset="0.5" stop-color="#3a3a3a"/><stop offset="0.6" stop-color="#000"/><stop offset="1" stop-color="#000"/></linearGradient></defs><circle cx="16" cy="16" r="14.6" fill="#000" stroke="#b8b8b8" stroke-width="1.3"/><circle cx="16" cy="16.5" r="12.3" fill="url(#led)"/></svg>
<div style="position:absolute;left:1117px;top:936px;width:96px;height:45px;box-sizing:border-box;border:2px solid #a0a0a0;border-radius:6px;"></div>
<div class="t" style="left:765.00px;width:800px;text-align:center;top:948.59px;font-size:19.5px;line-height:19.5px;color:#f0f0f0;font-weight:normal;">Show</div>
<div class="t" style="left:1124.00px;top:1003.99px;font-size:19.5px;line-height:19.5px;color:#f0f0f0;font-weight:normal;">display speed</div>
<div class="t" style="left:1281.00px;top:1003.99px;font-size:19.5px;line-height:19.5px;color:#f0f0f0;font-weight:normal;">1x</div>
<div style="position:absolute;left:1125px;top:1054px;width:186px;height:5px;box-sizing:border-box;background:linear-gradient(#858585,#a2a2a2);"></div>
<svg style="position:absolute;left:1117px;top:1044px" width="18" height="24" viewBox="0 0 18 24"><path d="M1 1h15v13.5l-7.5 7.6l-7.5-7.6z" fill="#f2f2f2"/></svg>
<div style="position:absolute;left:1078px;top:1115px;width:294px;height:198px;box-sizing:border-box;border:2px solid #d8d8d8;"></div>
<div style="position:absolute;left:1078px;top:1141px;width:294px;height:2px;box-sizing:border-box;background:#d8d8d8;"></div>
<div class="t" style="left:1084.80px;top:1119.53px;font-size:16.5px;line-height:16.5px;color:#f0f0f0;font-weight:normal;">Print file</div>
<div style="position:absolute;left:1090px;top:1158px;width:141px;height:56px;box-sizing:border-box;border:2px solid #a0a0a0;border-radius:6px;"></div>
<div class="t" style="left:760.50px;width:800px;text-align:center;top:1175.89px;font-size:19.5px;line-height:19.5px;color:#f0f0f0;font-weight:normal;">Write print file</div>
<div class="t" style="left:1266.00px;top:1157.23px;font-size:17.8px;line-height:17.8px;color:#ffffff;font-weight:normal;-webkit-text-stroke:0.3px #fff;">on grid</div>
<div class="t" style="left:1240.50px;top:1191.83px;font-size:17.8px;line-height:17.8px;color:#404040;font-weight:normal;">on  height map</div>
<div style="position:absolute;left:1099px;top:1268px;width:21px;height:21px;box-sizing:border-box;background:#ffffff;border:2px solid #a0a0a0;"></div>
<div class="t" style="left:1124.70px;top:1269.29px;font-size:19.5px;line-height:19.5px;color:#f0f0f0;font-weight:normal;">Check collision</div>
<div style="position:absolute;left:421px;top:906px;width:623px;height:164px;box-sizing:border-box;border:2px solid #d8d8d8;"></div>
<div style="position:absolute;left:421px;top:933px;width:623px;height:1px;box-sizing:border-box;background:#d8d8d8;"></div>
<div class="t" style="left:427.50px;top:912.23px;font-size:16.5px;line-height:16.5px;color:#f0f0f0;font-weight:normal;">Object collection</div>
<div style="position:absolute;left:421px;top:934px;width:623px;height:1px;box-sizing:border-box;background:#555;"></div>
<div style="position:absolute;left:438px;top:971px;width:96px;height:57px;box-sizing:border-box;border:2px solid #a0a0a0;border-radius:6px;"></div>
<div class="t" style="left:86.00px;width:800px;text-align:center;top:990.09px;font-size:19.5px;line-height:19.5px;color:#f0f0f0;font-weight:normal;">Add</div>
<div style="position:absolute;left:550px;top:971px;width:96px;height:57px;box-sizing:border-box;border:2px solid #a0a0a0;border-radius:6px;"></div>
<div class="t" style="left:198.00px;width:800px;text-align:center;top:990.09px;font-size:19.5px;line-height:19.5px;color:#f0f0f0;font-weight:normal;">Clear</div>
<div style="position:absolute;left:666px;top:971px;width:96px;height:57px;box-sizing:border-box;border:2px solid #a0a0a0;border-radius:6px;"></div>
<div class="t" style="left:314.00px;width:800px;text-align:center;top:990.09px;font-size:19.5px;line-height:19.5px;color:#f0f0f0;font-weight:normal;">Clear all</div>
<div class="t" style="left:798.30px;top:965.29px;font-size:19.5px;line-height:19.5px;color:#f0f0f0;font-weight:normal;">total objects</div>
<div class="t" style="left:796.50px;top:1008.49px;font-size:19.5px;line-height:19.5px;color:#f0f0f0;font-weight:normal;">index</div>
<div style="position:absolute;left:921px;top:960px;width:78px;height:32px;box-sizing:border-box;border:2px solid #a0a0a0;"></div>
<div class="t" style="left:190.60px;width:800px;text-align:right;top:965.19px;font-size:19.5px;line-height:19.5px;color:#f0f0f0;font-weight:normal;">0</div>
<div style="position:absolute;left:921px;top:1002px;width:76px;height:33px;box-sizing:border-box;border:2px solid #555555;border-radius:0 6px 6px 0;"></div>
<div style="position:absolute;left:964px;top:1002px;width:33px;height:33px;box-sizing:border-box;background:#6a6a6a;border-radius:0 6px 6px 0;"></div>
<div class="t" style="left:159.40px;width:800px;text-align:right;top:1008.29px;font-size:19.5px;line-height:19.5px;color:#6a6a6a;font-weight:normal;">0</div>
<div style="position:absolute;left:975px;top:1008px;width:0;height:0;border-left:6px solid transparent;border-right:6px solid transparent;border-bottom:6px solid #141414;"></div>
<div style="position:absolute;left:975px;top:1023px;width:0;height:0;border-left:6px solid transparent;border-right:6px solid transparent;border-top:6px solid #555555;"></div>
<div style="position:absolute;left:550px;top:1082px;width:168px;height:231px;box-sizing:border-box;border:2px solid #d8d8d8;"></div>
<div style="position:absolute;left:550px;top:1110px;width:168px;height:2px;box-sizing:border-box;background:#d8d8d8;"></div>
<div class="t" style="left:556.00px;top:1087.65px;font-size:17.9px;line-height:17.9px;color:#f0f0f0;font-weight:normal;">Translate</div>
<div class="t" style="left:191.90px;width:800px;text-align:center;top:1136.99px;font-size:19.5px;line-height:19.5px;color:#f0f0f0;font-weight:normal;">X</div>
<div style="position:absolute;left:618px;top:1130px;width:76px;height:33px;box-sizing:border-box;border:2px solid #a0a0a0;"></div>
<div class="t" style="left:-113.80px;width:800px;text-align:right;top:1136.99px;font-size:19.5px;line-height:19.5px;color:#f0f0f0;font-weight:normal;">20</div>
<div class="t" style="left:191.90px;width:800px;text-align:center;top:1181.79px;font-size:19.5px;line-height:19.5px;color:#f0f0f0;font-weight:normal;">Y</div>
<div style="position:absolute;left:618px;top:1175px;width:76px;height:33px;box-sizing:border-box;border:2px solid #a0a0a0;"></div>
<div class="t" style="left:-113.80px;width:800px;text-align:right;top:1181.79px;font-size:19.5px;line-height:19.5px;color:#f0f0f0;font-weight:normal;">-20</div>
<div class="t" style="left:191.90px;width:800px;text-align:center;top:1226.49px;font-size:19.5px;line-height:19.5px;color:#f0f0f0;font-weight:normal;">Z</div>
<div style="position:absolute;left:618px;top:1220px;width:76px;height:33px;box-sizing:border-box;border:2px solid #a0a0a0;"></div>
<div class="t" style="left:-113.80px;width:800px;text-align:right;top:1226.49px;font-size:19.5px;line-height:19.5px;color:#f0f0f0;font-weight:normal;">0</div>
<div style="position:absolute;left:574px;top:1266px;width:122px;height:35px;box-sizing:border-box;border:2px solid #a0a0a0;border-radius:6px;"></div>
<div class="t" style="left:235.00px;width:800px;text-align:center;top:1273.89px;font-size:19.5px;line-height:19.5px;color:#f0f0f0;font-weight:normal;">Apply</div>
<div style="position:absolute;left:735px;top:1082px;width:168px;height:231px;box-sizing:border-box;border:2px solid #d8d8d8;"></div>
<div style="position:absolute;left:735px;top:1110px;width:168px;height:2px;box-sizing:border-box;background:#d8d8d8;"></div>
<div class="t" style="left:740.50px;top:1087.65px;font-size:17.9px;line-height:17.9px;color:#f0f0f0;font-weight:normal;">Rotate</div>
<div class="t" style="left:374.40px;width:800px;text-align:center;top:1136.99px;font-size:19.5px;line-height:19.5px;color:#f0f0f0;font-weight:normal;">X</div>
<div style="position:absolute;left:802px;top:1130px;width:77px;height:33px;box-sizing:border-box;border:2px solid #a0a0a0;"></div>
<div class="t" style="left:70.50px;width:800px;text-align:right;top:1136.99px;font-size:19.5px;line-height:19.5px;color:#f0f0f0;font-weight:normal;">0</div>
<div class="t" style="left:374.40px;width:800px;text-align:center;top:1181.79px;font-size:19.5px;line-height:19.5px;color:#f0f0f0;font-weight:normal;">Y</div>
<div style="position:absolute;left:802px;top:1175px;width:77px;height:33px;box-sizing:border-box;border:2px solid #a0a0a0;"></div>
<div class="t" style="left:70.50px;width:800px;text-align:right;top:1181.79px;font-size:19.5px;line-height:19.5px;color:#f0f0f0;font-weight:normal;">0</div>
<div class="t" style="left:374.40px;width:800px;text-align:center;top:1226.49px;font-size:19.5px;line-height:19.5px;color:#f0f0f0;font-weight:normal;">Z</div>
<div style="position:absolute;left:802px;top:1220px;width:77px;height:33px;box-sizing:border-box;border:2px solid #a0a0a0;"></div>
<div class="t" style="left:70.50px;width:800px;text-align:right;top:1226.49px;font-size:19.5px;line-height:19.5px;color:#f0f0f0;font-weight:normal;">0</div>
<div style="position:absolute;left:760px;top:1264px;width:119px;height:37px;box-sizing:border-box;border:2px solid #a0a0a0;border-radius:6px;"></div>
<div class="t" style="left:419.50px;width:800px;text-align:center;top:1272.29px;font-size:19.5px;line-height:19.5px;color:#f0f0f0;font-weight:normal;">Apply</div>
<div style="position:absolute;left:36px;top:1340px;width:1182px;height:46px;box-sizing:border-box;background:#a48e40;border:2px solid #a0a0a0;"></div>
<div class="t" style="left:227.50px;width:800px;text-align:center;top:1351.98px;font-size:23.3px;line-height:23.3px;color:#1a1a1a;font-weight:bold;letter-spacing:0.35px;">Substrate GoldAu_Mapp03 plotted on the Print files tab</div>
<div style="position:absolute;left:1240px;top:1337px;width:137px;height:52px;box-sizing:border-box;border:2px solid #a0a0a0;border-radius:8px;"></div>
<div class="t" style="left:908.50px;width:800px;text-align:center;top:1352.89px;font-size:19.5px;line-height:19.5px;color:#f0f0f0;font-weight:normal;">Exit</div>
</body></html>
